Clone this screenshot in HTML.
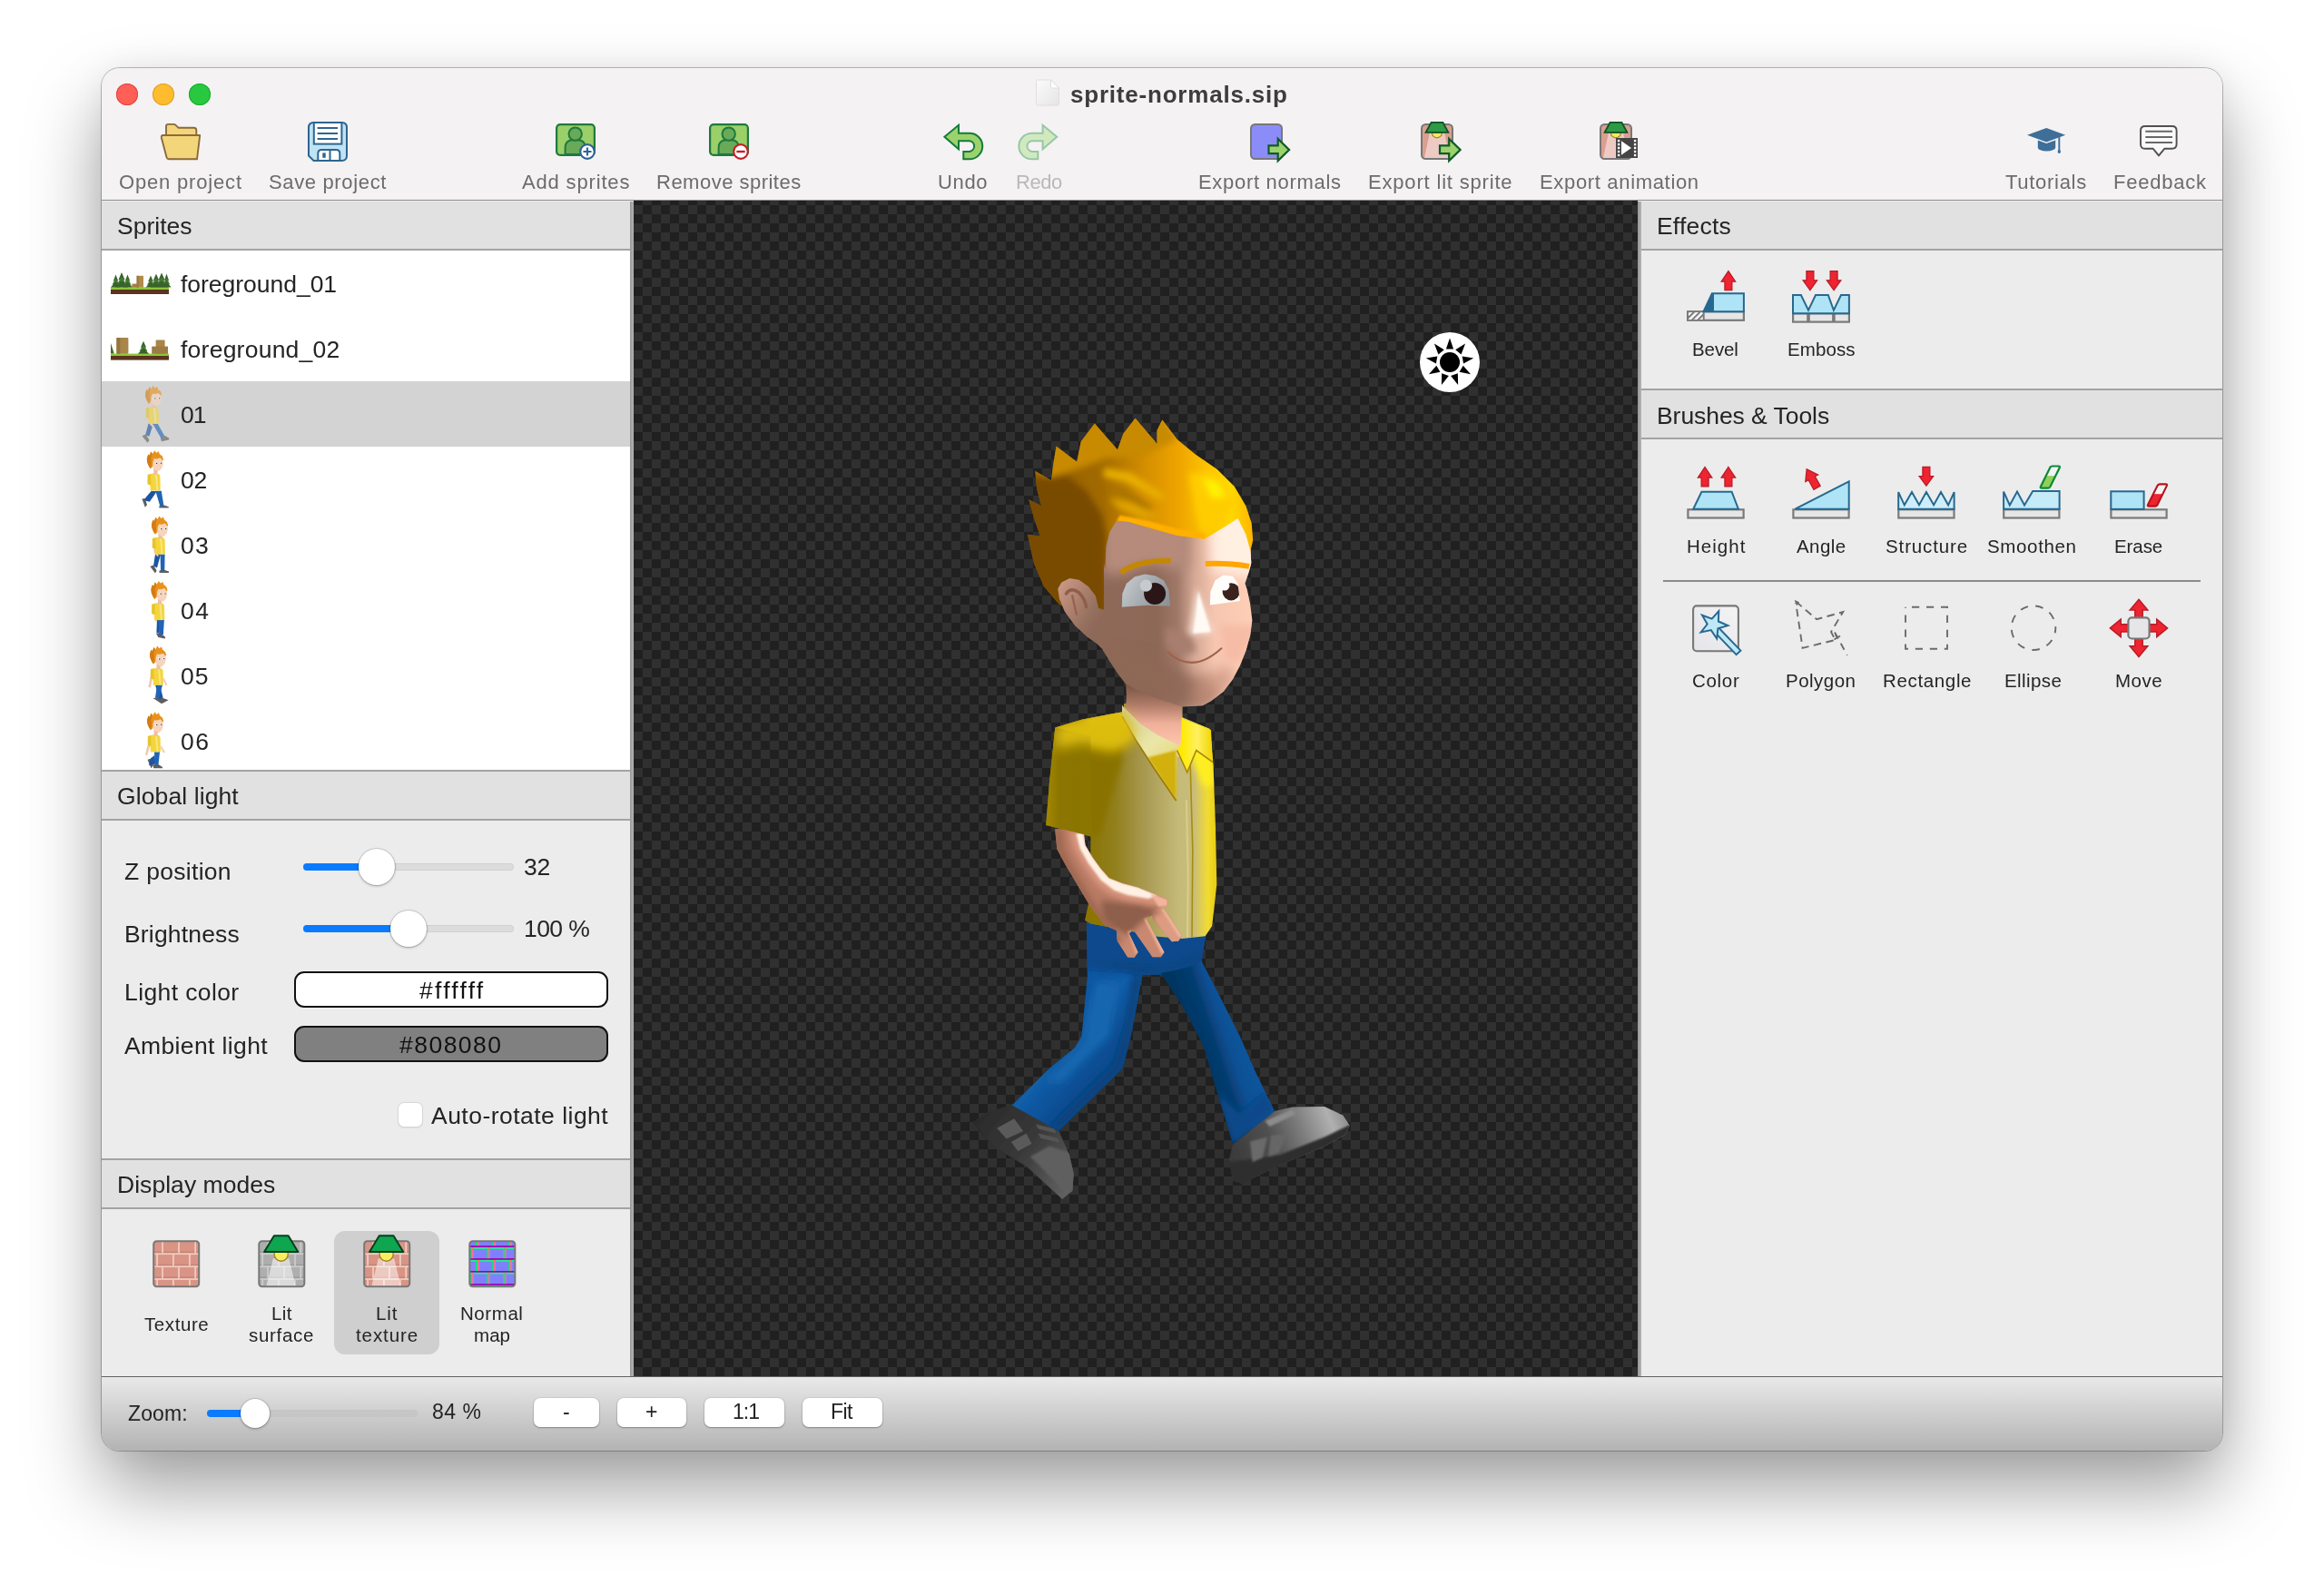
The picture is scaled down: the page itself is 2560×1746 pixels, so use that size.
<!DOCTYPE html>
<html><head><meta charset="utf-8"><title>sprite-normals.sip</title>
<style>

*{box-sizing:border-box;margin:0;padding:0}
html,body{width:2560px;height:1746px;overflow:hidden;background:#fff;font-family:"Liberation Sans",sans-serif;}
.t{position:absolute;white-space:nowrap;}
.abs{position:absolute}
#win{position:absolute;left:112px;top:75px;width:2336px;height:1523px;border-radius:20px;background:#ececec;
 box-shadow:0 0 0 1px rgba(0,0,0,0.25),0 41px 82px rgba(0,0,0,0.38),0 0 36px rgba(0,0,0,0.05);}
#clip{position:absolute;left:112px;top:75px;width:2336px;height:1523px;border-radius:20px;overflow:hidden;}
#page{position:absolute;left:-112px;top:-75px;width:2560px;height:1746px;}
.t{will-change:transform}
.hdr{position:absolute;background:#e1e1e1;border-bottom:2px solid #a3a3a3;height:54px}
.hl{position:absolute;height:2px;background:#a3a3a3}

</style></head>
<body>
<div id="win"></div>
<div id="clip"><div id="page">
<div class="abs" style="left:112px;top:75px;width:2336px;height:146px;background:#f4f2f3"></div>
<div class="abs" style="left:112px;top:220px;width:2336px;height:1px;background:#8e8e8e"></div>
<div class="abs" style="left:128px;top:92px;width:24px;height:24px;border-radius:12px;background:#fe5f57;box-shadow:inset 0 0 0 1px #e0443e"></div>
<div class="abs" style="left:168px;top:92px;width:24px;height:24px;border-radius:12px;background:#febc2e;box-shadow:inset 0 0 0 1px #dea123"></div>
<div class="abs" style="left:208px;top:92px;width:24px;height:24px;border-radius:12px;background:#28c840;box-shadow:inset 0 0 0 1px #1aab29"></div>
<div class="t" style="left:130.7px;top:189.9px;font-size:22px;line-height:22px;color:#6c6c6c;letter-spacing:0.821px;">Open project</div>
<div class="t" style="left:295.7px;top:189.9px;font-size:22px;line-height:22px;color:#6c6c6c;letter-spacing:0.646px;">Save project</div>
<div class="t" style="left:574.7px;top:189.9px;font-size:22px;line-height:22px;color:#6c6c6c;letter-spacing:0.834px;">Add sprites</div>
<div class="t" style="left:723.1px;top:189.9px;font-size:22px;line-height:22px;color:#6c6c6c;letter-spacing:0.489px;">Remove sprites</div>
<div class="t" style="left:1033.2px;top:189.9px;font-size:22px;line-height:22px;color:#6c6c6c;letter-spacing:0.667px;">Undo</div>
<div class="t" style="left:1118.6px;top:189.9px;font-size:22px;line-height:22px;color:#b9b9b9;letter-spacing:-0.466px;">Redo</div>
<div class="t" style="left:1319.8px;top:189.9px;font-size:22px;line-height:22px;color:#6c6c6c;letter-spacing:0.696px;">Export normals</div>
<div class="t" style="left:1507.1px;top:189.9px;font-size:22px;line-height:22px;color:#6c6c6c;letter-spacing:0.819px;">Export lit sprite</div>
<div class="t" style="left:1695.8px;top:189.9px;font-size:22px;line-height:22px;color:#6c6c6c;letter-spacing:0.667px;">Export animation</div>
<div class="t" style="left:2208.7px;top:189.9px;font-size:22px;line-height:22px;color:#6c6c6c;letter-spacing:0.706px;">Tutorials</div>
<div class="t" style="left:2327.6px;top:189.9px;font-size:22px;line-height:22px;color:#6c6c6c;letter-spacing:0.754px;">Feedback</div>
<div class="t" style="left:1178.5px;top:91.0px;font-size:26px;line-height:26px;color:#3d3d3d;letter-spacing:0.794px;font-weight:bold;">sprite-normals.sip</div>
<div class="abs" style="left:112px;top:222px;width:582px;height:1294px;background:#ececec"></div>
<div class="hdr" style="left:112px;top:222px;width:582px"></div>
<div class="abs" style="left:112px;top:276px;width:582px;height:572px;background:#fff"></div>
<div class="abs" style="left:112px;top:420px;width:582px;height:72px;background:#d3d3d3"></div>
<div class="hl" style="left:112px;top:848px;width:582px"></div>
<div class="hdr" style="left:112px;top:850px;width:582px"></div>
<div class="hl" style="left:112px;top:1276px;width:582px"></div>
<div class="hdr" style="left:112px;top:1278px;width:582px"></div>
<div class="abs" style="left:694px;top:222px;width:4px;height:1294px;background:linear-gradient(90deg,#989898,#b4b4b4)"></div>
<div class="abs" style="left:1804px;top:222px;width:4px;height:1294px;background:linear-gradient(90deg,#989898,#b4b4b4)"></div>
<div id="cv" class="abs" style="left:698px;top:221px;width:1106px;height:1295px;background-color:#202020;background-image:conic-gradient(#303030 25%,#202020 0 50%,#303030 0 75%,#202020 0);background-size:20px 20px;background-position:10px 5px"></div>
<div class="abs" style="left:1808px;top:222px;width:640px;height:1294px;background:#ececec"></div>
<div class="hdr" style="left:1808px;top:222px;width:640px"></div>
<div class="hl" style="left:1808px;top:428px;width:640px"></div>
<div class="hdr" style="left:1808px;top:430px;width:640px"></div>
<div class="abs" style="left:112px;top:1516px;width:2336px;height:82px;background:linear-gradient(#e9e9e9,#b3b3b3);border-top:1.5px solid #606060"></div>
<div class="t" style="left:128.7px;top:236.2px;font-size:26.5px;line-height:26.5px;color:#242424;letter-spacing:0.004px;">Sprites</div>
<div class="t" style="left:128.5px;top:864.2px;font-size:26.5px;line-height:26.5px;color:#242424;letter-spacing:0.102px;">Global light</div>
<div class="t" style="left:128.5px;top:1292.2px;font-size:26.5px;line-height:26.5px;color:#242424;letter-spacing:0.043px;">Display modes</div>
<div class="t" style="left:1824.5px;top:236.2px;font-size:26.5px;line-height:26.5px;color:#242424;letter-spacing:0.196px;">Effects</div>
<div class="t" style="left:1824.5px;top:444.6px;font-size:26.5px;line-height:26.5px;color:#242424;letter-spacing:-0.057px;">Brushes &amp; Tools</div>
<div class="t" style="left:198.7px;top:299.6px;font-size:26.5px;line-height:26.5px;color:#242424;letter-spacing:-0.025px;">foreground_01</div>
<div class="t" style="left:198.7px;top:371.6px;font-size:26.5px;line-height:26.5px;color:#242424;letter-spacing:0.242px;">foreground_02</div>
<div class="t" style="left:198.7px;top:443.6px;font-size:26.5px;line-height:26.5px;color:#242424;letter-spacing:-1.000px;">01</div>
<div class="t" style="left:198.7px;top:515.6px;font-size:26.5px;line-height:26.5px;color:#242424;letter-spacing:-0.177px;">02</div>
<div class="t" style="left:198.7px;top:587.6px;font-size:26.5px;line-height:26.5px;color:#242424;letter-spacing:1.223px;">03</div>
<div class="t" style="left:198.7px;top:659.6px;font-size:26.5px;line-height:26.5px;color:#242424;letter-spacing:1.523px;">04</div>
<div class="t" style="left:198.7px;top:731.6px;font-size:26.5px;line-height:26.5px;color:#242424;letter-spacing:1.023px;">05</div>
<div class="t" style="left:198.7px;top:803.6px;font-size:26.5px;line-height:26.5px;color:#242424;letter-spacing:1.523px;">06</div>
<div class="t" style="left:136.6px;top:946.6px;font-size:26.5px;line-height:26.5px;color:#242424;letter-spacing:0.301px;">Z position</div>
<div class="t" style="left:576.8px;top:941.8px;font-size:26.5px;line-height:26.5px;color:#242424;letter-spacing:-0.177px;">32</div>
<div class="t" style="left:136.6px;top:1015.5px;font-size:26.5px;line-height:26.5px;color:#242424;letter-spacing:0.166px;">Brightness</div>
<div class="t" style="left:576.8px;top:1010.1px;font-size:26.5px;line-height:26.5px;color:#242424;letter-spacing:-0.585px;">100 %</div>
<div class="t" style="left:136.6px;top:1079.5px;font-size:26.5px;line-height:26.5px;color:#242424;letter-spacing:0.393px;">Light color</div>
<div class="t" style="left:136.6px;top:1139.3px;font-size:26.5px;line-height:26.5px;color:#242424;letter-spacing:0.367px;">Ambient light</div>
<div class="t" style="left:474.9px;top:1216.1px;font-size:26.5px;line-height:26.5px;color:#242424;letter-spacing:0.476px;">Auto-rotate light</div>
<div class="t" style="left:158.6px;top:1449.3px;font-size:20.5px;line-height:20.5px;color:#242424;letter-spacing:0.580px;">Texture</div>
<div class="t" style="left:298.6px;top:1437.3px;font-size:20.5px;line-height:20.5px;color:#242424;letter-spacing:0.375px;">Lit</div>
<div class="t" style="left:273.8px;top:1461.0px;font-size:20.5px;line-height:20.5px;color:#242424;letter-spacing:0.680px;">surface</div>
<div class="t" style="left:507.4px;top:1437.3px;font-size:20.5px;line-height:20.5px;color:#242424;letter-spacing:0.567px;">Normal</div>
<div class="t" style="left:521.6px;top:1461.0px;font-size:20.5px;line-height:20.5px;color:#242424;letter-spacing:0.062px;">map</div>
<div class="t" style="left:1864.3px;top:375.4px;font-size:20.5px;line-height:20.5px;color:#242424;letter-spacing:-0.095px;">Bevel</div>
<div class="t" style="left:1968.8px;top:375.4px;font-size:20.5px;line-height:20.5px;color:#242424;letter-spacing:0.090px;">Emboss</div>
<div class="t" style="left:1857.9px;top:591.6px;font-size:20.5px;line-height:20.5px;color:#242424;letter-spacing:1.029px;">Height</div>
<div class="t" style="left:1978.7px;top:591.6px;font-size:20.5px;line-height:20.5px;color:#242424;letter-spacing:0.443px;">Angle</div>
<div class="t" style="left:2076.7px;top:591.6px;font-size:20.5px;line-height:20.5px;color:#242424;letter-spacing:0.879px;">Structure</div>
<div class="t" style="left:2189.4px;top:591.6px;font-size:20.5px;line-height:20.5px;color:#242424;letter-spacing:0.650px;">Smoothen</div>
<div class="t" style="left:2329.3px;top:591.6px;font-size:20.5px;line-height:20.5px;color:#242424;letter-spacing:-0.088px;">Erase</div>
<div class="t" style="left:1864.0px;top:739.6px;font-size:20.5px;line-height:20.5px;color:#242424;letter-spacing:0.703px;">Color</div>
<div class="t" style="left:1967.0px;top:739.6px;font-size:20.5px;line-height:20.5px;color:#242424;letter-spacing:0.487px;">Polygon</div>
<div class="t" style="left:2073.8px;top:739.6px;font-size:20.5px;line-height:20.5px;color:#242424;letter-spacing:0.649px;">Rectangle</div>
<div class="t" style="left:2207.8px;top:739.6px;font-size:20.5px;line-height:20.5px;color:#242424;letter-spacing:0.419px;">Ellipse</div>
<div class="t" style="left:2329.9px;top:739.6px;font-size:20.5px;line-height:20.5px;color:#242424;letter-spacing:0.524px;">Move</div>
<div class="t" style="left:140.6px;top:1545.7px;font-size:23px;line-height:23px;color:#242424;letter-spacing:0.105px;">Zoom:</div>
<div class="t" style="left:476.2px;top:1544.3px;font-size:23px;line-height:23px;color:#242424;letter-spacing:0.492px;">84 %</div>
<div class="abs" style="left:334px;top:951.0px;width:232px;height:8px;border-radius:4.0px;background:#dcdcdc;box-shadow:inset 0 0 0 1px rgba(0,0,0,0.05)"></div>
<div class="abs" style="left:334px;top:951.0px;width:81px;height:8px;border-radius:4.0px;background:#0a7aff"></div>
<div class="abs" style="left:395.0px;top:935.0px;width:40px;height:40px;border-radius:50%;background:#fff;box-shadow:0 0 0 1px rgba(0,0,0,0.12),0 1px 3px rgba(0,0,0,0.28)"></div>
<div class="abs" style="left:334px;top:1019.0px;width:232px;height:8px;border-radius:4.0px;background:#dcdcdc;box-shadow:inset 0 0 0 1px rgba(0,0,0,0.05)"></div>
<div class="abs" style="left:334px;top:1019.0px;width:116px;height:8px;border-radius:4.0px;background:#0a7aff"></div>
<div class="abs" style="left:430.0px;top:1003.0px;width:40px;height:40px;border-radius:50%;background:#fff;box-shadow:0 0 0 1px rgba(0,0,0,0.12),0 1px 3px rgba(0,0,0,0.28)"></div>
<div class="abs" style="left:324px;top:1070px;width:346px;height:40px;border-radius:11px;background:#fff;border:2px solid #111"></div>
<div class="abs" style="left:324px;top:1130px;width:346px;height:40px;border-radius:11px;background:#808080;border:2px solid #111"></div>
<div class="t" style="left:461.5px;top:1077.9px;font-size:26.5px;line-height:26.5px;color:#111;letter-spacing:2.279px;">#ffffff</div>
<div class="t" style="left:440.2px;top:1138.2px;font-size:26.5px;line-height:26.5px;color:#111;letter-spacing:1.472px;">#808080</div>
<div class="abs" style="left:438px;top:1214px;width:28px;height:28px;border-radius:7px;background:#fff;box-shadow:inset 0 0 0 1px rgba(0,0,0,0.16),0 1px 1px rgba(0,0,0,0.06)"></div>
<div class="abs" style="left:368px;top:1356px;width:116px;height:136px;border-radius:12px;background:#cfcfcf"></div>
<div class="t" style="left:414.0px;top:1437.3px;font-size:20.5px;line-height:20.5px;color:#242424;letter-spacing:0.925px;">Lit</div>
<div class="t" style="left:391.6px;top:1461.0px;font-size:20.5px;line-height:20.5px;color:#242424;letter-spacing:0.905px;">texture</div>
<div class="abs" style="left:228px;top:1553px;width:232px;height:8px;border-radius:4px;background:#c6c6c6"></div>
<div class="abs" style="left:228px;top:1553px;width:53px;height:8px;border-radius:4px;background:#0a7aff"></div>
<div class="abs" style="left:265.0px;top:1541.0px;width:32px;height:32px;border-radius:50%;background:#fff;box-shadow:0 0 0 1px rgba(0,0,0,0.1),0 1px 3px rgba(0,0,0,0.3)"></div>
<div class="abs" style="left:588px;top:1540px;width:72px;height:32px;border-radius:7px;background:#fff;box-shadow:0 0 0 1px rgba(0,0,0,0.06),0 1px 2px rgba(0,0,0,0.28)"></div>
<div class="t" style="left:620.2px;top:1543.9px;font-size:23px;line-height:23px;color:#222;letter-spacing:0.000px;">-</div>
<div class="abs" style="left:680px;top:1540px;width:76px;height:32px;border-radius:7px;background:#fff;box-shadow:0 0 0 1px rgba(0,0,0,0.06),0 1px 2px rgba(0,0,0,0.28)"></div>
<div class="t" style="left:711.3px;top:1543.9px;font-size:23px;line-height:23px;color:#222;letter-spacing:0.000px;">+</div>
<div class="abs" style="left:776px;top:1540px;width:88px;height:32px;border-radius:7px;background:#fff;box-shadow:0 0 0 1px rgba(0,0,0,0.06),0 1px 2px rgba(0,0,0,0.28)"></div>
<div class="t" style="left:807.0px;top:1543.9px;font-size:23px;line-height:23px;color:#222;letter-spacing:-1.000px;">1:1</div>
<div class="abs" style="left:884px;top:1540px;width:88px;height:32px;border-radius:7px;background:#fff;box-shadow:0 0 0 1px rgba(0,0,0,0.06),0 1px 2px rgba(0,0,0,0.28)"></div>
<div class="t" style="left:915.4px;top:1543.9px;font-size:23px;line-height:23px;color:#222;letter-spacing:-0.524px;">Fit</div>
<svg class="abs" style="left:0;top:0" width="2560" height="260" viewBox="0 0 2560 260"><g transform="translate(1141.5 88)"><defs><linearGradient id="dg" x1="0" y1="0" x2="1" y2="1"><stop offset="0" stop-color="#fbfbfb"/><stop offset="1" stop-color="#e6e5e6"/></linearGradient></defs>
<path d="M1.5 0H16L25 9V26.5a1.5 1.5 0 0 1-1.5 1.5H1.5A1.5 1.5 0 0 1 0 26.5V1.5A1.5 1.5 0 0 1 1.5 0Z" fill="url(#dg)" stroke="#dcdbdc" stroke-width="0.8"/>
<path d="M16 0V7.5a1.5 1.5 0 0 0 1.5 1.5H25Z" fill="#fff" stroke="#d9d8d9" stroke-width="0.8"/></g><g transform="translate(177 136)"><path d="M6 13V3.2Q6 .9 8.3 .9H14.6Q15.6 .9 16.3 1.6L19.4 4.7H36.6Q39.3 4.7 39.3 7.4V13Z" fill="#f3d67a" stroke="#8a6a3c" stroke-width="1.9" stroke-linejoin="round"/>
<path d="M2.6 13H43.2L40 39.3H9Q7.2 39.3 6.6 37.5L.9 16Q.3 13 2.6 13Z" fill="#f3d67a" stroke="#8a6a3c" stroke-width="1.9" stroke-linejoin="round"/></g><g transform="translate(339 134)"><path d="M6.5 1H37.5Q43 1 43 6.5V37.5Q43 43 37.5 43H6.5L1 37.5V6.5Q1 1 6.5 1Z" fill="#bfe3f3" stroke="#2d6590" stroke-width="2"/>
<rect x="6.8" y="1" width="30.6" height="23.6" fill="#fff" stroke="#2d6590" stroke-width="2"/>
<path d="M10.6 6.9H33M10.6 12.9H33M10.6 19H33" stroke="#2d6590" stroke-width="2"/>
<path d="M11.3 43V35Q11.3 30.9 15.4 30.9H31.2Q35.3 30.9 35.3 35V43Z" fill="#fff" stroke="#2d6590" stroke-width="2"/>
<path d="M24.5 31V43" stroke="#2d6590" stroke-width="2"/>
<rect x="16.3" y="34.4" width="3.4" height="5.4" fill="#2d6590"/></g><g transform="translate(612 136)"><rect x="1.1" y="1.1" width="41.8" height="33.8" rx="4" fill="#9bcf6a" stroke="#1d7a3e" stroke-width="2.2"/>
<path d="M10.6 34V27Q10.6 18.3 19 18.3H24.4Q32.8 18.3 32.8 27V34Z" fill="#68aa58" stroke="#1d7a3e" stroke-width="2"/>
<circle cx="21.7" cy="11.6" r="7.2" fill="#68aa58" stroke="#1d7a3e" stroke-width="2"/>
<circle cx="35" cy="31" r="7.8" fill="#fff" stroke="#2f6496" stroke-width="2.2"/><path d="M30.5 31H39.5M35 26.5V35.5" stroke="#2f6496" stroke-width="2.2"/></g><g transform="translate(781 136)"><rect x="1.1" y="1.1" width="41.8" height="33.8" rx="4" fill="#9bcf6a" stroke="#1d7a3e" stroke-width="2.2"/>
<path d="M10.6 34V27Q10.6 18.3 19 18.3H24.4Q32.8 18.3 32.8 27V34Z" fill="#68aa58" stroke="#1d7a3e" stroke-width="2"/>
<circle cx="21.7" cy="11.6" r="7.2" fill="#68aa58" stroke="#1d7a3e" stroke-width="2"/>
<circle cx="35" cy="31" r="7.8" fill="#fff" stroke="#c4202a" stroke-width="2.2"/><path d="M30.3 31H39.7" stroke="#c4202a" stroke-width="2.4"/></g><g transform="translate(1039 136.3)"><path d="M1.4 14.5L17 1.5V10.5H29A14.25 14.25 0 0 1 29 39H22.3V30.6H29A5.9 5.9 0 0 0 29 18.9H17V28L1.4 14.5Z" fill="#9bd26c" stroke="#157a3c" stroke-width="2" stroke-linejoin="miter"/></g><g transform="translate(1165.6 136.3) scale(-1 1)"><path d="M1.4 14.5L17 1.5V10.5H29A14.25 14.25 0 0 1 29 39H22.3V30.6H29A5.9 5.9 0 0 0 29 18.9H17V28L1.4 14.5Z" fill="#d2e9c0" stroke="#96c7a6" stroke-width="2"/></g><g transform="translate(1377 136)"><rect x="1" y="1" width="34" height="38" rx="4.5" fill="#8c8cf8" stroke="#777" stroke-width="2"/></g><g transform="translate(1397.5 152.3)"><path d="M0 8.1H10.2V0.6L22.6 12.7L10.2 24.8V16.9H0Z" fill="#9bd26c" stroke="#0f5a2a" stroke-width="2.2" stroke-linejoin="miter"/></g><g transform="translate(1565 136)"><defs><clipPath id="lc1565"><rect x="1" y="1" width="34" height="38" rx="4.5"/></clipPath></defs>
<rect x="1" y="1" width="34" height="38" rx="4.5" fill="#dc9e8e"/>
<path d="M10 10L3.5 40H32.5L26 10Z" fill="#edcbc4" clip-path="url(#lc1565)"/>
<rect x="1" y="1" width="34" height="38" rx="4.5" fill="none" stroke="#777" stroke-width="2"/>
<path d="M12.3 10.2A5.6 5.6 0 0 0 23.5 10.2Z" fill="#f4ea62" stroke="#a08622" stroke-width="1.2"/>
<path d="M11.6 -1.2H24.4L30.4 9.8H5.6Z" fill="#2f9a45" stroke="#0c5226" stroke-width="1.8" stroke-linejoin="miter"/></g><g transform="translate(1586 152.3)"><path d="M0 8.1H10.2V0.6L22.6 12.7L10.2 24.8V16.9H0Z" fill="#9bd26c" stroke="#0f5a2a" stroke-width="2.2" stroke-linejoin="miter"/></g><g transform="translate(1762 136)"><defs><clipPath id="lc1762"><rect x="1" y="1" width="34" height="38" rx="4.5"/></clipPath></defs>
<rect x="1" y="1" width="34" height="38" rx="4.5" fill="#dc9e8e"/>
<path d="M10 10L3.5 40H32.5L26 10Z" fill="#edcbc4" clip-path="url(#lc1762)"/>
<rect x="1" y="1" width="34" height="38" rx="4.5" fill="none" stroke="#777" stroke-width="2"/>
<path d="M12.3 10.2A5.6 5.6 0 0 0 23.5 10.2Z" fill="#f4ea62" stroke="#a08622" stroke-width="1.2"/>
<path d="M11.6 -1.2H24.4L30.4 9.8H5.6Z" fill="#2f9a45" stroke="#0c5226" stroke-width="1.8" stroke-linejoin="miter"/></g><g transform="translate(1780 152)"><rect x="0" y="0" width="24" height="22" fill="#444"/><rect x="1.9" y="1.9000000000000001" width="2.4" height="2.4" fill="#fff"/><rect x="19.9" y="1.9000000000000001" width="2.4" height="2.4" fill="#fff"/><rect x="1.9" y="5.8999999999999995" width="2.4" height="2.4" fill="#fff"/><rect x="19.9" y="5.8999999999999995" width="2.4" height="2.4" fill="#fff"/><rect x="1.9" y="9.8" width="2.4" height="2.4" fill="#fff"/><rect x="19.9" y="9.8" width="2.4" height="2.4" fill="#fff"/><rect x="1.9" y="13.8" width="2.4" height="2.4" fill="#fff"/><rect x="19.9" y="13.8" width="2.4" height="2.4" fill="#fff"/><rect x="1.9" y="17.8" width="2.4" height="2.4" fill="#fff"/><rect x="19.9" y="17.8" width="2.4" height="2.4" fill="#fff"/><path d="M6 3.3V18.8L17 11Z" fill="#fff"/></g><g transform="translate(2233 141)"><path d="M0 7.7L21.2 0L42.2 7.7L21.2 15.4Z" fill="#3d6f99"/>
<path d="M11.8 13.6L21.2 17L31.2 13.4V21.5Q31.2 23 29 24Q21.5 27 13.8 24Q11.8 23 11.8 21.5Z" fill="#3d6f99"/>
<path d="M35.3 10V25.5" stroke="#3d6f99" stroke-width="1.9"/><ellipse cx="35.3" cy="26" rx="1.7" ry="2" fill="#3d6f99"/></g><g transform="translate(2357 138)"><path d="M6 1H35.6Q40.6 1 40.6 6V20.8Q40.6 25.8 35.6 25.8H27.2L21 33.4L14.8 25.8H6Q1 25.8 1 20.8V6Q1 1 6 1Z" fill="#fafafa" stroke="#505050" stroke-width="1.9" stroke-linejoin="round"/>
<path d="M6.3 6.8H36M6.3 13H36M6.3 19H36" stroke="#686868" stroke-width="2"/></g></svg>
<svg class="abs" style="left:0;top:0" width="2560" height="1746" viewBox="0 0 2560 1746"><g transform="translate(1858 298.3)"><defs><pattern id="hat" width="4.6" height="4.6" patternUnits="userSpaceOnUse" patternTransform="rotate(-45)"><rect width="4.6" height="4.6" fill="#fff"/><rect width="4.6" height="2.1" fill="#7a7a7a"/></pattern></defs>
<rect x="1.1" y="44.9" width="61.8" height="9.6" fill="#e6e6e6" stroke="#7a7a7a" stroke-width="2.2"/>
<rect x="2" y="45.8" width="16.5" height="7.8" fill="url(#hat)"/><path d="M18.7 45V54.5" stroke="#7a7a7a" stroke-width="2"/>
<path d="M27.9 24.9H62.9V44.9H18.5Z" fill="#aee4f5" stroke="#276890" stroke-width="2" stroke-linejoin="miter"/>
<path d="M27.9 24.9H30V44.9H18.5Z" fill="#276890"/><path d="M45.9 0.3L53.6 11.9H49.85V21.3H41.949999999999996V11.9H38.199999999999996Z" fill="#ee2430" stroke="#b81c28" stroke-width="1.3" stroke-linejoin="miter"/></g><g transform="translate(1974 298.3)"><rect x="1.1" y="47" width="61.8" height="9.299999999999997" fill="#e6e6e6" stroke="#7a7a7a" stroke-width="2.2"/><path d="M18 47V56M45.9 47V56" stroke="#7a7a7a" stroke-width="3.6"/><path d="M1 26.7H9.9L18 43.5L26 26.7H39.8L45.9 43.5L54 26.7H62.9V47H1Z" fill="#aee4f5" stroke="#276890" stroke-width="2" stroke-linejoin="miter"/><path d="M19.9 21.3L27.599999999999998 10.5H23.849999999999998V0.3H15.95V10.5H12.2Z" fill="#ee2430" stroke="#b81c28" stroke-width="1.3" stroke-linejoin="miter"/><path d="M46.1 21.3L53.800000000000004 10.5H50.050000000000004V0.3H42.15V10.5H38.4Z" fill="#ee2430" stroke="#b81c28" stroke-width="1.3" stroke-linejoin="miter"/></g><g transform="translate(1858.3 514.2)"><rect x="1.1" y="47.1" width="61.199999999999996" height="9.199999999999996" fill="#e6e6e6" stroke="#7a7a7a" stroke-width="2.2"/><path d="M16.1 27.5H49.3L56.6 46.5H6.9Z" fill="#aee4f5" stroke="#276890" stroke-width="2" stroke-linejoin="miter"/><path d="M19.8 0.3L27.5 11.9H23.75V21.7H15.850000000000001V11.9H12.100000000000001Z" fill="#ee2430" stroke="#b81c28" stroke-width="1.3" stroke-linejoin="miter"/><path d="M45.6 0.3L53.300000000000004 11.9H49.550000000000004V21.7H41.65V11.9H37.9Z" fill="#ee2430" stroke="#b81c28" stroke-width="1.3" stroke-linejoin="miter"/></g><g transform="translate(1974.3 514.2)"><rect x="1.1" y="47.1" width="61.199999999999996" height="9.199999999999996" fill="#e6e6e6" stroke="#7a7a7a" stroke-width="2.2"/><path d="M3.2 46.5L62.4 16.2V46.5Z" fill="#aee4f5" stroke="#276890" stroke-width="2" stroke-linejoin="miter"/><g transform="translate(15.9 2.6) rotate(-29)"><path d="M0 0L7.9 11.4H4.1V23.5H-4.1V11.4H-7.9Z" fill="#ee2430" stroke="#b81c28" stroke-width="1.3" stroke-linejoin="miter"/></g></g><g transform="translate(2090.2 514.2)"><rect x="1.1" y="47.1" width="61.199999999999996" height="9.199999999999996" fill="#e6e6e6" stroke="#7a7a7a" stroke-width="2.2"/><path d="M1 27.9L7.6 42.1L15.8 27.9L23.8 42.1L31.7 27.9L39.9 42.1L47.8 27.9L55.9 42.1L62.4 27.9V46.5H1Z" fill="#cdeefa" stroke="#276890" stroke-width="2" stroke-linejoin="miter"/><path d="M31.7 20.9L39.4 10.399999999999999H35.65V0.2H27.75V10.399999999999999H24.0Z" fill="#ee2430" stroke="#b81c28" stroke-width="1.3" stroke-linejoin="miter"/></g><g transform="translate(2206.1 514.2)"><rect x="1.1" y="47.1" width="61.199999999999996" height="9.199999999999996" fill="#e6e6e6" stroke="#7a7a7a" stroke-width="2.2"/><path d="M1 27.4L7.7 42.3L15.9 27.4L23.9 42.3L33.1 26.9H62.5V46.5H1Z" fill="#c5eaf8" stroke="#276890" stroke-width="2" stroke-linejoin="miter"/><defs><clipPath id="er1"><path d="M54.6 -0.7H61.6Q63.4 -0.7 62.6 1L52.1 22.3Q51.3 23.5 49.8 23.5H42.8Q41 23.5 41.8 21.8L52.3 0.5Q53.1 -0.7 54.6 -0.7Z"/></clipPath></defs><g clip-path="url(#er1)"><rect x="38" y="-3" width="28" height="13" fill="#f3f3f3"/><rect x="38" y="10" width="28" height="15" fill="#8fd05a"/></g><path d="M54.6 -0.7H61.6Q63.4 -0.7 62.6 1L52.1 22.3Q51.3 23.5 49.8 23.5H42.8Q41 23.5 41.8 21.8L52.3 0.5Q53.1 -0.7 54.6 -0.7Z" fill="none" stroke="#0b8a35" stroke-width="2.2"/></g><g transform="translate(2324.3 514.2)"><rect x="1.1" y="47.1" width="61.199999999999996" height="9.199999999999996" fill="#e6e6e6" stroke="#7a7a7a" stroke-width="2.2"/><rect x="1" y="27.1" width="36.3" height="19.6" fill="#aee4f5" stroke="#276890" stroke-width="2"/><defs><clipPath id="er2"><path d="M54.8 19.2H61.5Q63.3 19.2 62.5 20.9L52 42.2Q51.2 43.4 49.7 43.4H42.7Q40.9 43.4 41.7 41.7L52.5 20.4Q53.3 19.2 54.8 19.2Z"/></clipPath></defs><g clip-path="url(#er2)"><rect x="38" y="17" width="28" height="13" fill="#f3f3f3"/><rect x="38" y="30" width="28" height="15" fill="#ee2430"/></g><path d="M54.8 19.2H61.5Q63.3 19.2 62.5 20.9L52 42.2Q51.2 43.4 49.7 43.4H42.7Q40.9 43.4 41.7 41.7L52.5 20.4Q53.3 19.2 54.8 19.2Z" fill="none" stroke="#b5121b" stroke-width="2.1"/></g><defs><linearGradient id="cg" x1="0" y1="1" x2="1" y2="0"><stop offset="0" stop-color="#e4e4ea"/><stop offset="1" stop-color="#f4f4f4"/></linearGradient></defs><rect x="1865.1" y="667.4" width="49.8" height="49.8" rx="4" fill="url(#cg)" stroke="#777" stroke-width="2.1"/><path d="M1888.3 695.8L1892.9 691.2L1917.4 716.6L1912.6 721.2Z" fill="#bfe8f7" stroke="#276890" stroke-width="2" stroke-linejoin="miter"/><polygon points="1893.3,673.2 1892.9,684.5 1903.3,689.1 1892.4,692.2 1891.2,703.5 1884.8,694.1 1873.7,696.5 1880.7,687.5 1875.0,677.7 1885.7,681.6" fill="#bfe8f7" stroke="#276890" stroke-width="2" stroke-linejoin="miter"/><path d="M1978.2 662.6L2001.2 682.2L2030.2 674.1L2017 696L2021.6 705L1985.6 713.8L1978.2 664" stroke="#6b6b6b" stroke-width="1.9" fill="none" stroke-dasharray="8.5 5.5"/><path d="M1976.6 660.8L1979.4 667.4L1982 663.3Z" fill="#6b6b6b"/><path d="M2021 696.5L2034.8 721.8" stroke="#6b6b6b" stroke-width="1.9" fill="none" stroke-dasharray="8 6"/><path d="M2020.5 704.5L2027 700.5M2024 703L2022 699" stroke="#6b6b6b" stroke-width="1.9" fill="none"/><rect x="2099" y="668.8" width="46" height="46" stroke="#6b6b6b" stroke-width="1.9" fill="none" stroke-width="2.1" stroke-dasharray="8.2 7.8" stroke-dashoffset="-7"/><circle cx="2240" cy="691.7" r="24.3" stroke="#6b6b6b" stroke-width="1.9" fill="none" stroke-width="2.1" stroke-dasharray="8.6 8.4" stroke-dashoffset="3"/><g transform="translate(2356 691.9)"><g transform="rotate(0)"><path d="M0 -31.6L9.8 -19.8H4.2V-8H-4.2V-19.8H-9.8Z" fill="#ee2430" stroke="#b81c28" stroke-width="1.5" stroke-linejoin="miter"/></g><g transform="rotate(90)"><path d="M0 -31.6L9.8 -19.8H4.2V-8H-4.2V-19.8H-9.8Z" fill="#ee2430" stroke="#b81c28" stroke-width="1.5" stroke-linejoin="miter"/></g><g transform="rotate(180)"><path d="M0 -31.6L9.8 -19.8H4.2V-8H-4.2V-19.8H-9.8Z" fill="#ee2430" stroke="#b81c28" stroke-width="1.5" stroke-linejoin="miter"/></g><g transform="rotate(270)"><path d="M0 -31.6L9.8 -19.8H4.2V-8H-4.2V-19.8H-9.8Z" fill="#ee2430" stroke="#b81c28" stroke-width="1.5" stroke-linejoin="miter"/></g><rect x="-11.6" y="-11.6" width="23.2" height="23.2" rx="4" fill="#e6e6e8" stroke="#777" stroke-width="2.2"/></g><defs><clipPath id="b1"><rect x="169.2" y="1367.2" width="50" height="50" rx="3.5"/></clipPath></defs><g clip-path="url(#b1)"><rect x="168.2" y="1366.2" width="52" height="52" fill="#d99485"/><rect x="168.2" y="1378.6000000000001" width="52" height="1.9" fill="#c98374"/><rect x="168.2" y="1392.6000000000001" width="52" height="1.9" fill="#c98374"/><rect x="168.2" y="1406.4" width="52" height="1.9" fill="#c98374"/><rect x="168.2" y="1419.6000000000001" width="52" height="1.9" fill="#c98374"/><rect x="168.2" y="1380.4" width="52" height="1.7" fill="#efcfc4"/><rect x="168.2" y="1394.4" width="52" height="1.7" fill="#efcfc4"/><rect x="168.2" y="1408.2" width="52" height="1.7" fill="#efcfc4"/><rect x="178.15" y="1367.2" width="1.7" height="13.2" fill="#efcfc4"/><rect x="196.15" y="1367.2" width="1.7" height="13.2" fill="#efcfc4"/><rect x="214.35" y="1367.2" width="1.7" height="13.2" fill="#efcfc4"/><rect x="172.25" y="1382.0" width="1.7" height="12.399999999999999" fill="#efcfc4"/><rect x="190.04999999999998" y="1382.0" width="1.7" height="12.399999999999999" fill="#efcfc4"/><rect x="208.04999999999998" y="1382.0" width="1.7" height="12.399999999999999" fill="#efcfc4"/><rect x="178.15" y="1396.0" width="1.7" height="12.2" fill="#efcfc4"/><rect x="196.15" y="1396.0" width="1.7" height="12.2" fill="#efcfc4"/><rect x="214.35" y="1396.0" width="1.7" height="12.2" fill="#efcfc4"/><rect x="172.25" y="1409.8" width="1.7" height="7.399999999999999" fill="#efcfc4"/><rect x="190.04999999999998" y="1409.8" width="1.7" height="7.399999999999999" fill="#efcfc4"/><rect x="208.04999999999998" y="1409.8" width="1.7" height="7.399999999999999" fill="#efcfc4"/></g><rect x="169.2" y="1367.2" width="50" height="50" rx="3.5" fill="none" stroke="#777" stroke-width="2"/><defs><clipPath id="b2"><rect x="285.3" y="1367.2" width="50" height="50" rx="3.5"/></clipPath></defs><g clip-path="url(#b2)"><rect x="284.3" y="1366.2" width="52" height="52" fill="#aeaeae"/><rect x="284.3" y="1378.6000000000001" width="52" height="1.9" fill="#9c9c9c"/><rect x="284.3" y="1392.6000000000001" width="52" height="1.9" fill="#9c9c9c"/><rect x="284.3" y="1406.4" width="52" height="1.9" fill="#9c9c9c"/><rect x="284.3" y="1419.6000000000001" width="52" height="1.9" fill="#9c9c9c"/><rect x="284.3" y="1380.4" width="52" height="1.7" fill="#cdcdcd"/><rect x="284.3" y="1394.4" width="52" height="1.7" fill="#cdcdcd"/><rect x="284.3" y="1408.2" width="52" height="1.7" fill="#cdcdcd"/><rect x="294.25" y="1367.2" width="1.7" height="13.2" fill="#cdcdcd"/><rect x="312.25" y="1367.2" width="1.7" height="13.2" fill="#cdcdcd"/><rect x="330.45" y="1367.2" width="1.7" height="13.2" fill="#cdcdcd"/><rect x="288.34999999999997" y="1382.0" width="1.7" height="12.399999999999999" fill="#cdcdcd"/><rect x="306.15" y="1382.0" width="1.7" height="12.399999999999999" fill="#cdcdcd"/><rect x="324.15" y="1382.0" width="1.7" height="12.399999999999999" fill="#cdcdcd"/><rect x="294.25" y="1396.0" width="1.7" height="12.2" fill="#cdcdcd"/><rect x="312.25" y="1396.0" width="1.7" height="12.2" fill="#cdcdcd"/><rect x="330.45" y="1396.0" width="1.7" height="12.2" fill="#cdcdcd"/><rect x="288.34999999999997" y="1409.8" width="1.7" height="7.399999999999999" fill="#cdcdcd"/><rect x="306.15" y="1409.8" width="1.7" height="7.399999999999999" fill="#cdcdcd"/><rect x="324.15" y="1409.8" width="1.7" height="7.399999999999999" fill="#cdcdcd"/><path d="M300.90000000000003 1386.2L292.8 1419.2H326.3L318.3 1386.2Z" fill="#fff" fill-opacity="0.55"/></g><rect x="285.3" y="1367.2" width="50" height="50" rx="3.5" fill="none" stroke="#777" stroke-width="2"/><circle cx="309.7" cy="1381.6000000000001" r="7.6" fill="#f7ef62" stroke="#a68420" stroke-width="1.4"/><path d="M301.90000000000003 1361.2H317.6L328.3 1379.0H291.1Z" fill="#0ea650" stroke="#06401c" stroke-width="2" stroke-linejoin="round"/><defs><clipPath id="b3"><rect x="401.2" y="1367.2" width="50" height="50" rx="3.5"/></clipPath></defs><g clip-path="url(#b3)"><rect x="400.2" y="1366.2" width="52" height="52" fill="#d99485"/><rect x="400.2" y="1378.6000000000001" width="52" height="1.9" fill="#c98374"/><rect x="400.2" y="1392.6000000000001" width="52" height="1.9" fill="#c98374"/><rect x="400.2" y="1406.4" width="52" height="1.9" fill="#c98374"/><rect x="400.2" y="1419.6000000000001" width="52" height="1.9" fill="#c98374"/><rect x="400.2" y="1380.4" width="52" height="1.7" fill="#efcfc4"/><rect x="400.2" y="1394.4" width="52" height="1.7" fill="#efcfc4"/><rect x="400.2" y="1408.2" width="52" height="1.7" fill="#efcfc4"/><rect x="410.15" y="1367.2" width="1.7" height="13.2" fill="#efcfc4"/><rect x="428.15" y="1367.2" width="1.7" height="13.2" fill="#efcfc4"/><rect x="446.34999999999997" y="1367.2" width="1.7" height="13.2" fill="#efcfc4"/><rect x="404.24999999999994" y="1382.0" width="1.7" height="12.399999999999999" fill="#efcfc4"/><rect x="422.04999999999995" y="1382.0" width="1.7" height="12.399999999999999" fill="#efcfc4"/><rect x="440.04999999999995" y="1382.0" width="1.7" height="12.399999999999999" fill="#efcfc4"/><rect x="410.15" y="1396.0" width="1.7" height="12.2" fill="#efcfc4"/><rect x="428.15" y="1396.0" width="1.7" height="12.2" fill="#efcfc4"/><rect x="446.34999999999997" y="1396.0" width="1.7" height="12.2" fill="#efcfc4"/><rect x="404.24999999999994" y="1409.8" width="1.7" height="7.399999999999999" fill="#efcfc4"/><rect x="422.04999999999995" y="1409.8" width="1.7" height="7.399999999999999" fill="#efcfc4"/><rect x="440.04999999999995" y="1409.8" width="1.7" height="7.399999999999999" fill="#efcfc4"/><path d="M416.8 1386.2L408.7 1419.2H442.2L434.2 1386.2Z" fill="#fff" fill-opacity="0.5"/></g><rect x="401.2" y="1367.2" width="50" height="50" rx="3.5" fill="none" stroke="#777" stroke-width="2"/><circle cx="425.59999999999997" cy="1381.6000000000001" r="7.6" fill="#f7ef62" stroke="#a68420" stroke-width="1.4"/><path d="M417.8 1361.2H433.5L444.2 1379.0H407.0Z" fill="#0ea650" stroke="#06401c" stroke-width="2" stroke-linejoin="round"/><defs><clipPath id="b4"><rect x="517.3" y="1367.2" width="50" height="50" rx="3.5"/></clipPath></defs><g clip-path="url(#b4)"><rect x="516.3" y="1366.2" width="52" height="52" fill="#8080ff"/><rect x="516.3" y="1372.2" width="52" height="1.8" fill="#9a00b0"/><rect x="516.3" y="1374.0000000000002" width="52" height="1.8" fill="#22f08a"/><rect x="516.3" y="1386.1" width="52" height="1.8" fill="#9a00b0"/><rect x="516.3" y="1387.9" width="52" height="1.8" fill="#22f08a"/><rect x="516.3" y="1400.0" width="52" height="1.8" fill="#9a00b0"/><rect x="516.3" y="1401.8000000000002" width="52" height="1.8" fill="#22f08a"/><rect x="516.3" y="1414.1" width="52" height="1.8" fill="#9a00b0"/><rect x="516.3" y="1415.9" width="52" height="1.8" fill="#22f08a"/><rect x="524.1999999999999" y="1366.2" width="1.8" height="6" fill="#00f060"/><rect x="525.9999999999999" y="1366.2" width="1.8" height="6" fill="#ff6aa8"/><rect x="542.1999999999999" y="1366.2" width="1.8" height="6" fill="#00f060"/><rect x="543.9999999999999" y="1366.2" width="1.8" height="6" fill="#ff6aa8"/><rect x="560.1" y="1366.2" width="1.8" height="6" fill="#00f060"/><rect x="561.9" y="1366.2" width="1.8" height="6" fill="#ff6aa8"/><rect x="518.1" y="1375.8" width="1.8" height="10.4" fill="#00f060"/><rect x="519.9" y="1375.8" width="1.8" height="10.4" fill="#ff6aa8"/><rect x="519.9" y="1374.1" width="1.8" height="1.8" fill="#ff7a30"/><rect x="536.1" y="1375.8" width="1.8" height="10.4" fill="#00f060"/><rect x="537.9" y="1375.8" width="1.8" height="10.4" fill="#ff6aa8"/><rect x="537.9" y="1374.1" width="1.8" height="1.8" fill="#ff7a30"/><rect x="554.1" y="1375.8" width="1.8" height="10.4" fill="#00f060"/><rect x="555.9" y="1375.8" width="1.8" height="10.4" fill="#ff6aa8"/><rect x="555.9" y="1374.1" width="1.8" height="1.8" fill="#ff7a30"/><rect x="524.1999999999999" y="1389.7" width="1.8" height="10.399999999999999" fill="#00f060"/><rect x="525.9999999999999" y="1389.7" width="1.8" height="10.399999999999999" fill="#ff6aa8"/><rect x="525.9999999999999" y="1388.0" width="1.8" height="1.8" fill="#ff7a30"/><rect x="542.1999999999999" y="1389.7" width="1.8" height="10.399999999999999" fill="#00f060"/><rect x="543.9999999999999" y="1389.7" width="1.8" height="10.399999999999999" fill="#ff6aa8"/><rect x="543.9999999999999" y="1388.0" width="1.8" height="1.8" fill="#ff7a30"/><rect x="560.1" y="1389.7" width="1.8" height="10.399999999999999" fill="#00f060"/><rect x="561.9" y="1389.7" width="1.8" height="10.399999999999999" fill="#ff6aa8"/><rect x="561.9" y="1388.0" width="1.8" height="1.8" fill="#ff7a30"/><rect x="518.1" y="1403.6000000000001" width="1.8" height="10.600000000000001" fill="#00f060"/><rect x="519.9" y="1403.6000000000001" width="1.8" height="10.600000000000001" fill="#ff6aa8"/><rect x="519.9" y="1401.9" width="1.8" height="1.8" fill="#ff7a30"/><rect x="536.1" y="1403.6000000000001" width="1.8" height="10.600000000000001" fill="#00f060"/><rect x="537.9" y="1403.6000000000001" width="1.8" height="10.600000000000001" fill="#ff6aa8"/><rect x="537.9" y="1401.9" width="1.8" height="1.8" fill="#ff7a30"/><rect x="554.1" y="1403.6000000000001" width="1.8" height="10.600000000000001" fill="#00f060"/><rect x="555.9" y="1403.6000000000001" width="1.8" height="10.600000000000001" fill="#ff6aa8"/><rect x="555.9" y="1401.9" width="1.8" height="1.8" fill="#ff7a30"/></g><rect x="517.3" y="1367.2" width="50" height="50" rx="3.5" fill="none" stroke="#777" stroke-width="2"/></svg>
<div class="abs" style="left:1832px;top:638.5px;width:592px;height:2px;background:#8b8b8b"></div>
<svg class="abs" style="left:0;top:0" width="2560" height="1746" viewBox="0 0 2560 1746"><defs><filter id="bl1" x="-20%" y="-20%" width="140%" height="140%"><feGaussianBlur stdDeviation="1.2"/></filter><filter id="bl3" x="-30%" y="-30%" width="160%" height="160%"><feGaussianBlur stdDeviation="3.5"/></filter><filter id="bl6" x="-40%" y="-40%" width="180%" height="180%"><feGaussianBlur stdDeviation="7"/></filter><filter id="soft" x="-5%" y="-5%" width="110%" height="110%"><feGaussianBlur stdDeviation="0.55"/></filter><clipPath id="cbs"><polygon points="1071.1,1236.0 1093.1,1223.4 1114.6,1217.1 1141.1,1230.9 1166.3,1246.1 1177.7,1271.3 1182.7,1292.8 1181.4,1311.7 1170.1,1321.0 1131.0,1285.2 1093.1,1262.5"/></clipPath><linearGradient id="gbs" gradientUnits="userSpaceOnUse" x1="1080.5" y1="1227.2" x2="1181.4" y2="1313.0"><stop offset="0" stop-color="#2b2b2b"/><stop offset="0.45" stop-color="#383838"/><stop offset="0.7" stop-color="#4c4c4c"/><stop offset="1" stop-color="#626262"/></linearGradient><clipPath id="cfs"><polygon points="1358.1,1260.5 1380.8,1242.3 1404.1,1224.1 1423.7,1219.6 1459.1,1219.1 1479.3,1228.4 1486.8,1239.8 1481.8,1249.9 1459.1,1262.5 1408.6,1283.9 1368.2,1304.1 1358.1,1300.4 1353.8,1277.6"/></clipPath><linearGradient id="gfs" gradientUnits="userSpaceOnUse" x1="1358.1" y1="1277.6" x2="1484.3" y2="1227.2"><stop offset="0" stop-color="#3a3a3a"/><stop offset="0.35" stop-color="#505050"/><stop offset="0.6" stop-color="#7c7c7c"/><stop offset="0.85" stop-color="#b0b0b0"/><stop offset="1" stop-color="#8a8a8a"/></linearGradient><clipPath id="cbl"><polygon points="1197.1,1015.1 1329.1,1025.2 1323.5,1060.1 1307.6,1067.6 1279.9,1073.7 1258.4,1073.7 1252.1,1108.5 1245.8,1141.3 1237.0,1176.7 1166.3,1246.1 1114.6,1217.6 1156.2,1176.7 1184.0,1154.0 1191.5,1141.3 1197.8,1075.7"/></clipPath><linearGradient id="gbl" gradientUnits="userSpaceOnUse" x1="1136.0" y1="1161.5" x2="1211.7" y2="1227.2"><stop offset="0" stop-color="#0b56a0"/><stop offset="0.25" stop-color="#125ea8"/><stop offset="0.6" stop-color="#094e94"/><stop offset="1" stop-color="#07427e"/></linearGradient><clipPath id="cfl"><polygon points="1278.6,1071.9 1307.6,1066.1 1323.5,1058.6 1345.5,1101.0 1365.7,1141.3 1383.4,1181.7 1404.1,1224.1 1358.1,1260.5 1340.4,1201.9 1325.3,1151.4 1302.6,1108.5"/></clipPath><linearGradient id="gfl" gradientUnits="userSpaceOnUse" x1="1315.2" y1="1161.5" x2="1375.8" y2="1141.3"><stop offset="0" stop-color="#053460"/><stop offset="0.4" stop-color="#063c70"/><stop offset="0.62" stop-color="#095094"/><stop offset="1" stop-color="#0b569e"/></linearGradient><clipPath id="csh"><polygon points="1201.4,921.5 1162.3,911.4 1152.2,908.9 1156.0,861.0 1162.3,801.6 1191.3,792.8 1226.7,786.0 1238.0,784.0 1238.0,775.1 1302.4,775.1 1302.4,790.3 1332.7,802.9 1336.5,843.3 1339.0,911.4 1340.3,974.5 1335.2,1020.0 1327.6,1031.3 1302.4,1033.9 1269.6,1031.3 1241.8,1025.0 1201.4,1017.4 1195.1,1013.7 1200.9,987.2"/></clipPath><linearGradient id="gsh" gradientUnits="userSpaceOnUse" x1="1201.4" y1="760.0" x2="1340.3" y2="760.0"><stop offset="0" stop-color="#8a7608"/><stop offset="0.2" stop-color="#92801e"/><stop offset="0.45" stop-color="#aa9c56"/><stop offset="0.7" stop-color="#c6ba78"/><stop offset="0.82" stop-color="#c8bc7a"/><stop offset="0.87" stop-color="#dccb58"/><stop offset="0.93" stop-color="#f2dc30"/><stop offset="1" stop-color="#e8cc10"/></linearGradient><linearGradient id="gnk" gradientUnits="userSpaceOnUse" x1="1150.0" y1="756.3" x2="1150.0" y2="824.5"><stop offset="0" stop-color="#7e5848"/><stop offset="0.3" stop-color="#b07c68"/><stop offset="0.6" stop-color="#f0b09a"/><stop offset="1" stop-color="#ffc8b0"/></linearGradient><linearGradient id="gcl" gradientUnits="userSpaceOnUse" x1="1236.0" y1="780.1" x2="1296.6" y2="860.9"><stop offset="0" stop-color="#cfcc9c"/><stop offset="0.5" stop-color="#ebe6a8"/><stop offset="1" stop-color="#e0d060"/></linearGradient><linearGradient id="gcr" gradientUnits="userSpaceOnUse" x1="1301.6" y1="770.0" x2="1336.0" y2="770.0"><stop offset="0" stop-color="#ffea00"/><stop offset="0.5" stop-color="#fff060"/><stop offset="1" stop-color="#f0d400"/></linearGradient><clipPath id="carm"><polygon points="1162.1,913.3 1193.4,913.3 1195.6,930.9 1203.6,944.5 1212.7,957.0 1221.8,967.2 1236.5,972.9 1253.6,977.4 1267.2,983.1 1286.5,991.1 1285.9,997.9 1280.8,1000.7 1279.7,1003.6 1260.4,1012.6 1242.2,1029.7 1233.1,1026.3 1217.2,1019.5 1201.3,999.0 1187.7,976.3 1174.1,953.6 1164.4,935.4"/><polygon points="1229.7,1022.9 1242.2,1025.1 1253.6,1049.0 1249.6,1054.7 1242.2,1054.4 1230.8,1036.5"/><polygon points="1246.7,1016.1 1261.5,1010.4 1282.5,1049.0 1278.8,1054.2 1269.5,1054.2 1249.0,1025.1"/><polygon points="1268.3,1005.8 1280.8,999.6 1301.8,1030.8 1298.1,1036.5 1291.0,1037.2 1270.6,1013.8"/></clipPath><linearGradient id="gslv" gradientUnits="userSpaceOnUse" x1="1151.0" y1="760.0" x2="1206.5" y2="760.0"><stop offset="0" stop-color="#a48a00"/><stop offset="0.3" stop-color="#8c7400"/><stop offset="1" stop-color="#8a7606"/></linearGradient><clipPath id="cface"><polygon points="1215.5,555 1368,555 1376,590 1377.5,606 1378.3,620.0 1376.0,629.1 1371.5,642.7 1373.8,649.5 1377.2,665.4 1379.4,683.6 1377.2,699.5 1372.6,716.5 1365.8,733.6 1357.9,748.4 1347.6,762.0 1334.0,772.2 1324.9,777.3 1302.2,778.5 1286.3,773.3 1269.3,767.7 1252.2,759.7 1239.7,752.9 1231.8,742.7 1222.7,729.0 1213.6,714.3 1209.1,709.7 1209.1,670.0"/></clipPath><linearGradient id="gface" gradientUnits="userSpaceOnUse" x1="1214.7" y1="620.0" x2="1379.4" y2="620.0"><stop offset="0" stop-color="#8f6959"/><stop offset="0.36" stop-color="#8d6757"/><stop offset="0.5" stop-color="#a07868"/><stop offset="0.61" stop-color="#d4a894"/><stop offset="0.75" stop-color="#f6c6b0"/><stop offset="1" stop-color="#ffceb6"/></linearGradient><linearGradient id="geL" gradientUnits="userSpaceOnUse" x1="1236.3" y1="637.0" x2="1288.6" y2="667.7"><stop offset="0" stop-color="#c8ccd0"/><stop offset="0.5" stop-color="#a4aaae"/><stop offset="1" stop-color="#8a9094"/></linearGradient><clipPath id="ceL"><polygon points="1235.8,668.8 1236.3,654.1 1240.9,642.7 1250.0,635.3 1261.3,632.5 1272.7,634.2 1281.8,639.3 1287.4,649.5 1289.1,667.7 1263.6,666.8"/></clipPath><clipPath id="ceR"><polygon points="1332.9,666.6 1333.4,651.8 1338.6,639.3 1347.6,633.6 1357.9,634.8 1363.5,642.7 1365.8,662.0"/></clipPath><clipPath id="chair"><polygon points="1138.9,620.3 1132.0,588.8 1145.9,590.7 1138.9,569.9 1133.2,550.3 1147.1,557.3 1142.1,538.3 1140.2,518.8 1157.9,528.9 1160.4,510.6 1163.5,491.6 1186.2,508.7 1190.7,486.6 1205.8,466.4 1231.0,495.4 1237.4,477.8 1250.6,460.7 1274.6,489.1 1274.6,474.0 1280.3,462.6 1296.7,484.1 1316.8,500.5 1340.8,516.9 1359.7,535.8 1372.4,557.3 1378.7,576.2 1380.2,595.1 1377.4,607.1 1372.4,588.8 1363.5,571.1 1349.7,580.0 1326.9,593.8 1296.7,590.1 1265.1,581.2 1243.7,574.9 1229.8,573.7 1222.2,586.3 1218.4,601.4 1217.2,626.7 1215.9,620.0 1216.1,671.7 1209.1,670.0 1195.4,679.1 1166.5,665.4 1150.0,646.1"/></clipPath><linearGradient id="ghair" gradientUnits="userSpaceOnUse" x1="1130" y1="0" x2="1381" y2="0"><stop offset="0" stop-color="#905a00"/><stop offset="0.34" stop-color="#a26a00"/><stop offset="0.52" stop-color="#d48e00"/><stop offset="0.68" stop-color="#f0a600"/><stop offset="0.82" stop-color="#ffca00"/><stop offset="0.9" stop-color="#ffd800"/><stop offset="1" stop-color="#ffb400"/></linearGradient><linearGradient id="gear" gradientUnits="userSpaceOnUse" x1="1164.8" y1="648.4" x2="1213.6" y2="679.1"><stop offset="0" stop-color="#c89884"/><stop offset="0.4" stop-color="#b08270"/><stop offset="0.8" stop-color="#94705e"/><stop offset="1" stop-color="#8f6959"/></linearGradient></defs><g filter="url(#soft)"><polygon points="1071.1,1236.0 1093.1,1223.4 1114.6,1217.1 1141.1,1230.9 1166.3,1246.1 1177.7,1271.3 1182.7,1292.8 1181.4,1311.7 1170.1,1321.0 1131.0,1285.2 1093.1,1262.5" fill="url(#gbs)" /><g clip-path="url(#cbs)"><polygon points="1067.9,1234.7 1093.1,1263.8 1131.0,1286.5 1171.3,1324.3 1161.2,1328.1 1120.9,1295.3 1083.0,1272.6 1060.3,1242.3" fill="#262626" filter="url(#bl1)"/><polygon points="1134.7,1273.9 1156.2,1262.5 1178.9,1270.1 1184.5,1292.8 1183.0,1313.0 1171.3,1311.7 1151.2,1290.3" fill="#5e5e5e" filter="url(#bl1)"/><polygon points="1098.1,1242.8 1117.1,1232.2 1127.2,1246.1 1108.7,1254.4" fill="#5a5a5a" /><polygon points="1113.8,1258.0 1130.5,1248.6 1136.5,1260.0 1121.4,1268.0" fill="#5a5a5a" /><polygon points="1141.1,1238.5 1161.2,1243.6 1163.8,1248.6 1143.6,1243.6" fill="#555" /><polygon points="1143.6,1248.6 1165.0,1253.7 1167.6,1258.7 1146.1,1253.7" fill="#555" /></g><polygon points="1358.1,1260.5 1380.8,1242.3 1404.1,1224.1 1423.7,1219.6 1459.1,1219.1 1479.3,1228.4 1486.8,1239.8 1481.8,1249.9 1459.1,1262.5 1408.6,1283.9 1368.2,1304.1 1358.1,1300.4 1353.8,1277.6" fill="url(#gfs)" /><g clip-path="url(#cfs)"><polygon points="1353.1,1280.2 1408.6,1272.6 1459.1,1252.4 1488.1,1238.5 1491.9,1252.4 1459.1,1267.5 1408.6,1287.7 1368.2,1307.9 1353.1,1302.9" fill="#2e2e2e" filter="url(#bl1)"/><polygon points="1377.0,1257.4 1396.0,1252.4 1390.9,1275.1 1379.6,1280.2" fill="#6a6a6a" filter="url(#bl1)"/><polygon points="1399.8,1251.1 1418.7,1248.6 1408.6,1270.1 1397.2,1273.9" fill="#666" filter="url(#bl1)"/><polygon points="1393.5,1234.7 1423.7,1222.1 1427.5,1227.2 1398.5,1241.0" fill="#8c8c8c" filter="url(#bl1)"/></g><polygon points="1197.1,1015.1 1329.1,1025.2 1323.5,1060.1 1307.6,1067.6 1279.9,1073.7 1258.4,1073.7 1252.1,1108.5 1245.8,1141.3 1237.0,1176.7 1166.3,1246.1 1114.6,1217.6 1156.2,1176.7 1184.0,1154.0 1191.5,1141.3 1197.8,1075.7" fill="url(#gbl)" /><g clip-path="url(#cbl)"><polygon points="1186.5,1005.0 1340.4,1017.7 1332.9,1060.6 1257.2,1071.9 1189.0,1068.1" fill="#084a8c" filter="url(#bl3)"/><polygon points="1204.2,1058.1 1257.2,1075.7 1282.4,1073.2 1325.3,1059.3 1327.8,1048.0 1282.4,1063.1 1231.9,1060.6" fill="#074482" filter="url(#bl3)"/><polygon points="1206.7,1080.8 1231.9,1083.3 1221.8,1141.3 1171.3,1191.8 1151.2,1191.8 1194.1,1146.4" fill="#1866ae" filter="url(#bl3)"/><polygon points="1258.4,1073.7 1252.1,1108.5 1245.8,1141.3 1237.0,1176.7 1166.3,1246.1 1156.2,1239.8 1226.9,1171.6 1239.5,1126.2 1247.1,1075.7" fill="#07437e" filter="url(#bl3)"/></g><polygon points="1278.6,1071.9 1307.6,1066.1 1323.5,1058.6 1345.5,1101.0 1365.7,1141.3 1383.4,1181.7 1404.1,1224.1 1358.1,1260.5 1340.4,1201.9 1325.3,1151.4 1302.6,1108.5" fill="url(#gfl)" /><g clip-path="url(#cfl)"><polygon points="1340.4,1201.9 1358.1,1260.5 1404.1,1224.1 1393.5,1201.9 1365.7,1227.2" fill="#08488a" filter="url(#bl3)"/></g><polygon points="1201.4,921.5 1162.3,911.4 1152.2,908.9 1156.0,861.0 1162.3,801.6 1191.3,792.8 1226.7,786.0 1238.0,784.0 1238.0,775.1 1302.4,775.1 1302.4,790.3 1332.7,802.9 1336.5,843.3 1339.0,911.4 1340.3,974.5 1335.2,1020.0 1327.6,1031.3 1302.4,1033.9 1269.6,1031.3 1241.8,1025.0 1201.4,1017.4 1195.1,1013.7 1200.9,987.2" fill="url(#gsh)" /><g clip-path="url(#csh)"><polygon points="1145.9,797.9 1226.7,785.2 1236.8,835.7 1211.5,921.5 1145.9,916.5" fill="#8a7200" filter="url(#bl3)"/><polygon points="1161.1,800.4 1238.0,783.2 1251.9,810.5 1226.7,825.6 1191.3,818.1 1163.6,825.6" fill="#dcbc0c" filter="url(#bl6)"/><polygon points="1191.3,792.8 1238.0,783.2 1246.9,800.4 1211.5,808.0" fill="#e8c810" filter="url(#bl3)"/><polygon points="1302.4,790.3 1333.9,802.9 1337.7,866.0 1325.1,866.0 1312.5,835.7" fill="#ffee20" filter="url(#bl3)"/><polygon points="1193.9,987.2 1211.5,987.2 1226.7,1027.5 1196.4,1020.0" fill="#8c7400" filter="url(#bl3)"/></g><polyline points="1311.2,843.3 1313.8,936.7 1313.0,1032.6" fill="none" stroke="#a88c10" stroke-width="1.6"/><polyline points="1306.9,881.2 1308.7,961.9 1308.0,1032.6" fill="none" stroke="#d8cc88" stroke-width="2.2"/><polygon points="1239.7,744.9 1240.9,767.7 1239.7,781.3 1263.6,813.1 1301.6,835.8 1302.2,776.7 1286.3,767.7" fill="url(#gnk)" /><polygon points="1236.0,777.1 1256.2,797.3 1276.4,810.4 1300.6,821.5 1296.6,826.5 1295.6,882.1 1271.4,846.7 1251.2,815.4 1236.0,789.2" fill="url(#gcl)" /><polygon points="1264.3,834.6 1295.6,826.5 1295.6,882.1" fill="#d2b010" filter="url(#bl1)"/><polyline points="1236.0,789.2 1251.2,815.4 1271.4,846.7 1295.6,882.1" fill="none" stroke="#9c7c08" stroke-width="1.8"/><polygon points="1301.6,790.2 1307.7,794.2 1334.0,804.3 1336.0,839.7 1317.8,826.5 1307.7,850.8 1296.6,826.5 1300.6,821.5" fill="url(#gcr)" /><polyline points="1296.6,826.5 1307.7,850.8 1317.8,826.5 1336.0,839.7" fill="none" stroke="#a8860a" stroke-width="1.6"/><g clip-path="url(#carm)"><rect x="1150" y="900" width="170" height="170" fill="#b97a64"/><polygon points="1228.6,1020.6 1304.7,997.9 1304.7,1060.3 1228.6,1060.3" fill="#c98870" /><polygon points="1267.2,1003.6 1304.7,992.2 1304.7,1039.9 1287.6,1039.9" fill="#dc9c82" filter="url(#bl1)"/><polygon points="1212.7,992.2 1253.6,995.6 1279.7,1003.6 1260.4,1013.8 1242.2,1030.8 1230.8,1025.1 1214.9,1014.9" fill="#8e5e4c" filter="url(#bl3)"/><polygon points="1160.4,912.7 1169.5,912.7 1171.8,935.4 1180.9,953.6 1194.5,976.3 1208.1,999.0 1224.0,1019.5 1237.7,1037.6 1230.8,1039.9 1212.7,1019.5 1196.8,999.0 1183.2,976.3 1169.5,953.6 1161.6,935.4" fill="#9c6650" filter="url(#bl3)"/><polygon points="1177.5,913.8 1194.5,913.8 1196.8,930.9 1204.7,944.5 1213.8,957.0 1222.9,967.2 1237.7,972.9 1254.7,977.4 1268.3,983.1 1287.6,991.1 1286.5,999.0 1264.9,995.6 1242.2,992.2 1224.0,985.4 1208.1,974.0 1193.4,953.6 1183.2,935.4" fill="#dc9880" filter="url(#bl3)"/><polygon points="1185.4,918.4 1193.4,917.3 1195.9,930.9 1203.8,944.5 1212.9,957.0 1222.0,967.2 1236.8,972.9 1253.8,977.4 1267.4,983.1 1275.1,986.5 1264.9,989.9 1242.2,986.0 1227.4,980.8 1212.7,969.5 1199.1,951.3 1190.0,935.4" fill="#fff0e4" filter="url(#bl1)"/><polygon points="1267.2,984.3 1286.5,991.1 1285.9,997.9 1276.3,999.0" fill="#f2b49c" filter="url(#bl1)"/><polygon points="1242.2,1026.3 1246.7,1025.1 1254.7,1049.0 1250.7,1051.3" fill="#e2a288" filter="url(#bl1)"/><polygon points="1260.4,1012.6 1264.9,1010.4 1283.3,1049.0 1279.7,1051.3" fill="#eeb094" filter="url(#bl1)"/><polygon points="1279.7,1001.9 1284.2,999.6 1302.4,1030.8 1299.0,1033.1" fill="#f0b49a" filter="url(#bl1)"/></g><g clip-path="url(#csh)"><polygon points="1152.2,908.9 1156.0,861.0 1162.3,801.6 1201.4,810.5 1202.7,921.5" fill="url(#gslv)" /><polygon points="1161.1,800.4 1238.0,783.2 1251.9,810.5 1226.7,825.6 1191.3,818.1 1163.6,825.6" fill="#dcbc0c" filter="url(#bl6)"/></g><polygon points="1215.5,555 1368,555 1376,590 1377.5,606 1378.3,620.0 1376.0,629.1 1371.5,642.7 1373.8,649.5 1377.2,665.4 1379.4,683.6 1377.2,699.5 1372.6,716.5 1365.8,733.6 1357.9,748.4 1347.6,762.0 1334.0,772.2 1324.9,777.3 1302.2,778.5 1286.3,773.3 1269.3,767.7 1252.2,759.7 1239.7,752.9 1231.8,742.7 1222.7,729.0 1213.6,714.3 1209.1,709.7 1209.1,670.0" fill="url(#gface)" /><g clip-path="url(#cface)"><polygon points="1213.6,556.4 1311.3,556.4 1309.0,628.0 1263.6,622.3 1236.3,633.6 1213.6,631.4" fill="#b68b7b" filter="url(#bl6)"/><polygon points="1331.7,556.4 1394.2,556.4 1394.2,638.2 1365.8,633.6 1343.1,631.4 1334.0,625.7" fill="#fff0e2" filter="url(#bl6)"/><polygon points="1213.6,714.3 1263.6,722.2 1309.0,742.7 1331.7,750.6 1343.1,762.0 1334.0,773.3 1324.9,778.5 1302.2,779.6 1269.3,768.8 1239.7,754.0" fill="#8f6757" filter="url(#bl6)" opacity="0.85"/><polygon points="1320.4,744.9 1354.5,733.6 1360.1,748.4 1347.6,763.1 1334.0,773.3 1324.9,778.5 1313.6,767.7" fill="#c8927e" filter="url(#bl6)" opacity="0.7"/><polygon points="1284.0,690.4 1311.3,699.5 1318.1,717.7 1297.7,722.2 1284.0,710.9" fill="#a87e6e" filter="url(#bl3)"/><polygon points="1343.1,688.2 1381.7,688.2 1377.2,706.3 1365.8,729.0 1349.9,729.0" fill="#f6bca6" filter="url(#bl3)"/><polygon points="1318.1,646.1 1336.3,697.2 1309.0,699.5 1313.6,674.5" fill="#ffeee4" filter="url(#bl3)" opacity="0.75"/><polygon points="1319.9,650.7 1333.8,695.9 1314.2,697.7 1317.4,676.8" fill="#fffaf4" filter="url(#bl1)"/></g><polygon points="1235.8,668.8 1236.3,654.1 1240.9,642.7 1250.0,635.3 1261.3,632.5 1272.7,634.2 1281.8,639.3 1287.4,649.5 1289.1,667.7 1263.6,666.8" fill="url(#geL)" /><g clip-path="url(#ceL)"><circle cx="1272.1" cy="654.1" r="12" fill="#2a1512"/><circle cx="1262.4" cy="645.2" r="6.6" fill="#c6cace"/></g><polygon points="1332.9,666.6 1333.4,651.8 1338.6,639.3 1347.6,633.6 1357.9,634.8 1363.5,642.7 1365.8,662.0" fill="#fffdfa" /><g clip-path="url(#ceR)"><circle cx="1356.2" cy="651.8" r="9.6" fill="#3a201a"/><circle cx="1349.0" cy="645.2" r="5.4" fill="#fff"/></g><path d="M1234.6 630.8Q1252.2 617.2 1289.7 617.7" fill="none" stroke="#c48800" stroke-width="5.8"/><path d="M1327.8 620.9Q1354.5 620.0 1376.0 623.9" fill="none" stroke="#ffa600" stroke-width="6"/><path d="M1286.9 718.8Q1313.6 743.2 1345.4 714.3" fill="none" stroke="#a0624a" stroke-width="2.1" stroke-linecap="round"/><polygon points="1138.9,620.3 1132.0,588.8 1145.9,590.7 1138.9,569.9 1133.2,550.3 1147.1,557.3 1142.1,538.3 1140.2,518.8 1157.9,528.9 1160.4,510.6 1163.5,491.6 1186.2,508.7 1190.7,486.6 1205.8,466.4 1231.0,495.4 1237.4,477.8 1250.6,460.7 1274.6,489.1 1274.6,474.0 1280.3,462.6 1296.7,484.1 1316.8,500.5 1340.8,516.9 1359.7,535.8 1372.4,557.3 1378.7,576.2 1380.2,595.1 1377.4,607.1 1372.4,588.8 1363.5,571.1 1349.7,580.0 1326.9,593.8 1296.7,590.1 1265.1,581.2 1243.7,574.9 1229.8,573.7 1222.2,586.3 1218.4,601.4 1217.2,626.7 1215.9,620.0 1216.1,671.7 1209.1,670.0 1195.4,679.1 1166.5,665.4 1150.0,646.1" fill="url(#ghair)" /><g clip-path="url(#chair)"><polygon points="1113.7,689.7 1113.7,540.9 1145.2,525.7 1174.3,523.2 1197.0,540.9 1214.0,567.4 1218.4,588.8 1219.7,689.7" fill="#794b00" filter="url(#bl3)"/><polygon points="1132.6,515.6 1163.5,487.9 1205.8,462.6 1250.6,457.6 1280.3,460.1 1296.7,484.1 1258.8,503.0 1220.9,504.3 1190.7,515.6 1157.9,525.7" fill="#c88a00" filter="url(#bl3)"/><polygon points="1309.3,520.7 1334.5,520.7 1359.7,550.9 1347.1,576.2 1324.4,588.8 1316.8,563.6" fill="#ffcc00" filter="url(#bl3)"/><polygon points="1324.4,525.7 1342.1,530.8 1350.9,548.4 1334.5,548.4" fill="#fff200" filter="url(#bl3)"/><polygon points="1215.9,515.6 1246.2,520.7 1284.0,545.9 1277.7,550.9 1239.9,530.8 1215.9,525.7" fill="#e8b000" filter="url(#bl3)"/><polygon points="1215.9,532.0 1239.9,539.6 1271.4,559.8 1258.8,562.3 1233.6,547.2" fill="#a87400" filter="url(#bl3)"/><polygon points="1220.9,548.4 1246.2,553.5 1277.7,569.9 1258.8,571.1 1233.6,561.0" fill="#e0a400" filter="url(#bl3)"/><polygon points="1229.8,574.3 1265.1,581.9 1296.7,590.7 1326.9,594.5 1326.9,587.5 1296.7,582.5 1265.1,573.7 1233.6,567.4" fill="#ffb000" filter="url(#bl1)"/></g><polygon points="1165.3,648.4 1169.3,641.6 1178.4,637.0 1188.6,638.7 1198.8,646.1 1206.8,656.3 1210.2,670.0 1216.2,672.0 1216.2,688.2 1213.6,714.3 1209.1,709.7 1197.7,701.8 1184.1,689.3 1172.7,673.4 1167.0,659.8" fill="url(#gear)" /><path d="M1174.4 654.1Q1179.5 646.1 1188.6 652.9Q1195.4 659.8 1196.6 668.8" fill="none" stroke="#8e5e4c" stroke-width="3.5" stroke-linecap="round"/><path d="M1181.2 656.3L1185.8 676.8" stroke="#96644f" stroke-width="2.4" stroke-linecap="round"/></g><circle cx="1597" cy="399" r="33" fill="#fff"/><circle cx="1597" cy="399" r="11" fill="#000"/><g transform="rotate(0 1597 399)"><path d="M1597 372.4L1601.1 384.4H1592.9Z" fill="#000"/></g><g transform="rotate(40 1597 399)"><path d="M1597 372.4L1601.1 384.4H1592.9Z" fill="#000"/></g><g transform="rotate(80 1597 399)"><path d="M1597 372.4L1601.1 384.4H1592.9Z" fill="#000"/></g><g transform="rotate(120 1597 399)"><path d="M1597 372.4L1601.1 384.4H1592.9Z" fill="#000"/></g><g transform="rotate(160 1597 399)"><path d="M1597 372.4L1601.1 384.4H1592.9Z" fill="#000"/></g><g transform="rotate(200 1597 399)"><path d="M1597 372.4L1601.1 384.4H1592.9Z" fill="#000"/></g><g transform="rotate(240 1597 399)"><path d="M1597 372.4L1601.1 384.4H1592.9Z" fill="#000"/></g><g transform="rotate(280 1597 399)"><path d="M1597 372.4L1601.1 384.4H1592.9Z" fill="#000"/></g><g transform="rotate(320 1597 399)"><path d="M1597 372.4L1601.1 384.4H1592.9Z" fill="#000"/></g></svg>
<svg class="abs" style="left:0;top:0" width="700" height="860" viewBox="0 0 700 860"><defs><clipPath id="lstc"><rect x="112" y="276" width="582" height="572"/></clipPath></defs><g clip-path="url(#lstc)"><g opacity="0.62"><polygon points="156.5,480.3 160.4,478.6 164.6,484.8 162.5,487.8" fill="#5e5e5e" /><polygon points="176.7,482.3 181.2,479.8 186.4,482.8 186.0,484.4 178.0,486.3" fill="#5e5e5e" /><polygon points="163.5,466.4 169.0,466.4 164.4,480.8 160.2,479.2" fill="#1b55a2" /><polygon points="168.0,466.4 173.6,466.4 181.2,480.2 177.4,482.8" fill="#2164b6" /><polygon points="162.0,459.8 165.0,459.8 167.0,465.8 169.5,469.3 167.5,470.3 163.5,465.8" fill="#f2c6aa" /><polygon points="161.0,449.3 166.0,448.1 173.0,448.6 174.6,450.8 174.9,466.8 164.0,467.1 163.6,460.8 160.8,459.8" fill="#f4d63c" /><polygon points="160.8,449.8 164.2,448.8 164.6,460.8 160.8,459.8" fill="#e6c42c" /><polygon points="169.2,448.8 171.0,448.8 172.4,466.8 170.6,466.8" fill="#f9e788" /><polygon points="167.5,443.8 172.0,445.8 171.5,449.8 167.5,449.4" fill="#eebfa4" /><polygon points="166.0,433.3 172.0,432.8 177.6,435.3 177.8,439.8 176.6,444.0 173.6,447.4 169.0,446.0 166.0,442.3" fill="#f7d4bc" /><circle cx="170.2" cy="439.0" r="1.25" fill="#fff"/><circle cx="175.2" cy="438.7" r="1.1" fill="#fff"/><circle cx="170.7" cy="439.1" r="0.75" fill="#3a2a2a"/><circle cx="175.6" cy="438.8" r="0.7" fill="#3a2a2a"/><polygon points="164.6,437.3 166.8,437.3 167.0,441.3 165.4,440.8" fill="#f2c4a8" /><polygon points="160.0,433.8 161.4,429.0 163.0,430.4 164.4,426.2 166.4,428.4 168.4,424.8 170.4,427.4 173.0,425.8 174.0,428.8 177.0,431.2 178.2,435.0 177.2,435.8 174.5,433.1 171.0,434.0 168.0,433.8 166.6,437.4 166.2,442.8 164.0,444.8 162.0,441.8 160.4,437.8" fill="#e8921e" /><polygon points="160.0,433.8 161.4,429.0 163.0,430.4 164.4,426.2 165.6,427.8 164.6,433.8 165.0,439.8 164.0,444.8 162.0,441.8 160.4,437.8" fill="#d27c12" /></g><polygon points="156.4,549.6 159.8,549.0 162.0,556.2 159.8,558.8" fill="#5e5e5e" /><polygon points="175.4,557.2 180.8,556.6 185.8,558.2 185.8,559.6 175.4,559.6" fill="#5e5e5e" /><polygon points="166.8,540.7 172.8,541.2 164.8,552.7 158.8,551.2 160.8,547.7" fill="#1b55a2" /><polygon points="171.3,540.7 177.8,540.7 180.4,557.2 176.2,557.2" fill="#2164b6" /><polygon points="164.3,533.2 166.8,533.2 169.8,537.2 173.8,539.2 173.3,541.0 168.3,539.8" fill="#f2c6aa" /><polygon points="162.8,522.7 167.8,521.5 174.8,522.0 176.4,524.2 176.7,540.2 165.8,540.5 165.4,534.2 162.6,533.2" fill="#f4d63c" /><polygon points="162.6,523.2 166.0,522.2 166.4,534.2 162.6,533.2" fill="#e6c42c" /><polygon points="171.0,522.2 172.8,522.2 174.2,540.2 172.4,540.2" fill="#f9e788" /><polygon points="169.3,515.2 173.8,517.2 173.3,523.2 169.3,522.8" fill="#eebfa4" /><polygon points="167.8,504.7 173.8,504.2 179.4,506.7 179.6,511.2 178.4,515.4 175.4,518.8 170.8,517.4 167.8,513.7" fill="#f7d4bc" /><circle cx="172.0" cy="510.4" r="1.25" fill="#fff"/><circle cx="177.0" cy="510.09999999999997" r="1.1" fill="#fff"/><circle cx="172.5" cy="510.5" r="0.75" fill="#3a2a2a"/><circle cx="177.4" cy="510.2" r="0.7" fill="#3a2a2a"/><polygon points="166.4,508.7 168.6,508.7 168.8,512.7 167.2,512.2" fill="#f2c4a8" /><polygon points="161.8,505.2 163.2,500.4 164.8,501.8 166.2,497.6 168.2,499.8 170.2,496.2 172.2,498.8 174.8,497.2 175.8,500.2 178.8,502.6 180.0,506.4 179.0,507.2 176.3,504.5 172.8,505.4 169.8,505.2 168.4,508.8 168.0,514.2 165.8,516.2 163.8,513.2 162.2,509.2" fill="#e8921e" /><polygon points="161.8,505.2 163.2,500.4 164.8,501.8 166.2,497.6 167.4,499.2 166.4,505.2 166.8,511.2 165.8,516.2 163.8,513.2 162.2,509.2" fill="#d27c12" /><polygon points="165.4,623.9 169.0,622.5 172.6,628.5 171.0,631.5" fill="#5e5e5e" /><polygon points="175.5,628.5 180.0,627.5 186.0,629.5 186.0,631.1 175.5,631.1" fill="#5e5e5e" /><polygon points="171.0,610.5 177.0,610.5 173.0,625.5 169.0,623.5" fill="#1b55a2" /><polygon points="176.5,610.5 181.6,610.5 181.3,628.5 177.0,628.5" fill="#2164b6" /><polygon points="169.0,603.5 171.6,603.5 173.0,609.5 175.0,612.5 173.4,613.1 170.0,609.5" fill="#f2c6aa" /><polygon points="168.0,593.0 173.0,591.8 180.0,592.3 181.6,594.5 181.9,610.5 171.0,610.8 170.6,604.5 167.8,603.5" fill="#f4d63c" /><polygon points="167.8,593.5 171.2,592.5 171.6,604.5 167.8,603.5" fill="#e6c42c" /><polygon points="176.2,592.5 178.0,592.5 179.4,610.5 177.6,610.5" fill="#f9e788" /><polygon points="174.5,587.5 179.0,589.5 178.5,593.5 174.5,593.1" fill="#eebfa4" /><polygon points="173.0,577.0 179.0,576.5 184.6,579.0 184.8,583.5 183.6,587.7 180.6,591.1 176.0,589.7 173.0,586.0" fill="#f7d4bc" /><circle cx="177.2" cy="582.7" r="1.25" fill="#fff"/><circle cx="182.2" cy="582.4" r="1.1" fill="#fff"/><circle cx="177.7" cy="582.8" r="0.75" fill="#3a2a2a"/><circle cx="182.6" cy="582.5" r="0.7" fill="#3a2a2a"/><polygon points="171.6,581.0 173.8,581.0 174.0,585.0 172.4,584.5" fill="#f2c4a8" /><polygon points="167.0,577.5 168.4,572.7 170.0,574.1 171.4,569.9 173.4,572.1 175.4,568.5 177.4,571.1 180.0,569.5 181.0,572.5 184.0,574.9 185.2,578.7 184.2,579.5 181.5,576.8 178.0,577.7 175.0,577.5 173.6,581.1 173.2,586.5 171.0,588.5 169.0,585.5 167.4,581.5" fill="#e8921e" /><polygon points="167.0,577.5 168.4,572.7 170.0,574.1 171.4,569.9 172.6,571.5 171.6,577.5 172.0,583.5 171.0,588.5 169.0,585.5 167.4,581.5" fill="#d27c12" /><polygon points="172.1,698.0 176.4,697.0 182.4,702.0 181.4,703.6 174.4,702.0" fill="#5e5e5e" /><polygon points="172.9,683.0 176.4,683.0 175.4,697.0 172.4,697.5" fill="#1b55a2" /><polygon points="174.4,683.0 180.9,683.0 179.9,699.0 175.4,699.0" fill="#2164b6" /><polygon points="169.8,676.0 172.0,676.0 172.8,684.0 170.8,684.6" fill="#f2c6aa" /><polygon points="167.4,665.5 172.4,664.3 179.4,664.8 181.0,667.0 181.3,683.0 170.4,683.3 170.0,677.0 167.2,676.0" fill="#f4d63c" /><polygon points="167.2,666.0 170.6,665.0 171.0,677.0 167.2,676.0" fill="#e6c42c" /><polygon points="175.6,665.0 177.4,665.0 178.8,683.0 177.0,683.0" fill="#f9e788" /><polygon points="173.9,659.0 178.4,661.0 177.9,666.0 173.9,665.6" fill="#eebfa4" /><polygon points="172.4,648.5 178.4,648.0 184.0,650.5 184.2,655.0 183.0,659.2 180.0,662.6 175.4,661.2 172.4,657.5" fill="#f7d4bc" /><circle cx="176.6" cy="654.2" r="1.25" fill="#fff"/><circle cx="181.6" cy="653.9" r="1.1" fill="#fff"/><circle cx="177.1" cy="654.3" r="0.75" fill="#3a2a2a"/><circle cx="182.0" cy="654" r="0.7" fill="#3a2a2a"/><polygon points="171.0,652.5 173.2,652.5 173.4,656.5 171.8,656.0" fill="#f2c4a8" /><polygon points="166.4,649.0 167.8,644.2 169.4,645.6 170.8,641.4 172.8,643.6 174.8,640.0 176.8,642.6 179.4,641.0 180.4,644.0 183.4,646.4 184.6,650.2 183.6,651.0 180.9,648.3 177.4,649.2 174.4,649.0 173.0,652.6 172.6,658.0 170.4,660.0 168.4,657.0 166.8,653.0" fill="#e8921e" /><polygon points="166.4,649.0 167.8,644.2 169.4,645.6 170.8,641.4 172.0,643.0 171.0,649.0 171.4,655.0 170.4,660.0 168.4,657.0 166.8,653.0" fill="#d27c12" /><polygon points="168.5,769.1 177.0,768.1 185.6,771.2 178.0,775.2" fill="#5e5e5e" /><polygon points="171.0,754.6 176.0,754.6 179.6,768.6 175.6,770.2" fill="#1b55a2" /><polygon points="173.0,754.6 179.0,754.6 175.0,769.6 171.0,768.6" fill="#2164b6" /><polygon points="165.4,746.6 168.0,747.6 165.8,757.6 163.4,757.0" fill="#f2c6aa" /><polygon points="166.0,737.1 171.0,735.9 178.0,736.4 179.6,738.6 179.9,754.6 169.0,754.9 168.6,748.6 165.8,747.6" fill="#f4d63c" /><polygon points="165.8,737.6 169.2,736.6 169.6,748.6 165.8,747.6" fill="#e6c42c" /><polygon points="174.2,736.6 176.0,736.6 177.4,754.6 175.6,754.6" fill="#f9e788" /><polygon points="179.0,747.6 181.0,747.0 184.5,754.6 182.6,755.6" fill="#f6cfb6" /><polygon points="172.5,730.6 177.0,732.6 176.5,737.6 172.5,737.2" fill="#eebfa4" /><polygon points="171.0,720.1 177.0,719.6 182.6,722.1 182.8,726.6 181.6,730.8 178.6,734.2 174.0,732.8 171.0,729.1" fill="#f7d4bc" /><circle cx="175.2" cy="725.8000000000001" r="1.25" fill="#fff"/><circle cx="180.2" cy="725.5" r="1.1" fill="#fff"/><circle cx="175.7" cy="725.9" r="0.75" fill="#3a2a2a"/><circle cx="180.6" cy="725.6" r="0.7" fill="#3a2a2a"/><polygon points="169.6,724.1 171.8,724.1 172.0,728.1 170.4,727.6" fill="#f2c4a8" /><polygon points="165.0,720.6 166.4,715.8 168.0,717.2 169.4,713.0 171.4,715.2 173.4,711.6 175.4,714.2 178.0,712.6 179.0,715.6 182.0,718.0 183.2,721.8 182.2,722.6 179.5,719.9 176.0,720.8 173.0,720.6 171.6,724.2 171.2,729.6 169.0,731.6 167.0,728.6 165.4,724.6" fill="#e8921e" /><polygon points="165.0,720.6 166.4,715.8 168.0,717.2 169.4,713.0 170.6,714.6 169.6,720.6 170.0,726.6 169.0,731.6 167.0,728.6 165.4,724.6" fill="#d27c12" /><polygon points="162.5,836.8 166.0,835.8 169.0,843.3 166.5,846.3" fill="#5e5e5e" /><polygon points="169.0,842.3 174.0,841.7 179.0,844.9 179.0,846.3 169.0,846.3" fill="#5e5e5e" /><polygon points="166.0,835.3 170.0,832.3 172.0,841.3 164.0,843.3" fill="#1b55a2" /><polygon points="170.0,828.3 176.0,828.3 174.5,842.3 170.5,842.3" fill="#2164b6" /><polygon points="162.4,821.3 165.0,822.3 162.2,832.3 160.0,831.7" fill="#f2c6aa" /><polygon points="163.0,810.8 168.0,809.6 175.0,810.1 176.6,812.3 176.9,828.3 166.0,828.6 165.6,822.3 162.8,821.3" fill="#f4d63c" /><polygon points="162.8,811.3 166.2,810.3 166.6,822.3 162.8,821.3" fill="#e6c42c" /><polygon points="171.2,810.3 173.0,810.3 174.4,828.3 172.6,828.3" fill="#f9e788" /><polygon points="176.0,822.3 178.0,821.7 182.0,828.3 180.0,829.7" fill="#f6cfb6" /><polygon points="169.5,803.3 174.0,805.3 173.5,811.3 169.5,810.9" fill="#eebfa4" /><polygon points="168.0,792.8 174.0,792.3 179.6,794.8 179.8,799.3 178.6,803.5 175.6,806.9 171.0,805.5 168.0,801.8" fill="#f7d4bc" /><circle cx="172.2" cy="798.5" r="1.25" fill="#fff"/><circle cx="177.2" cy="798.1999999999999" r="1.1" fill="#fff"/><circle cx="172.7" cy="798.5999999999999" r="0.75" fill="#3a2a2a"/><circle cx="177.6" cy="798.3" r="0.7" fill="#3a2a2a"/><polygon points="166.6,796.8 168.8,796.8 169.0,800.8 167.4,800.3" fill="#f2c4a8" /><polygon points="162.0,793.3 163.4,788.5 165.0,789.9 166.4,785.7 168.4,787.9 170.4,784.3 172.4,786.9 175.0,785.3 176.0,788.3 179.0,790.7 180.2,794.5 179.2,795.3 176.5,792.6 173.0,793.5 170.0,793.3 168.6,796.9 168.2,802.3 166.0,804.3 164.0,801.3 162.4,797.3" fill="#e8921e" /><polygon points="162.0,793.3 163.4,788.5 165.0,789.9 166.4,785.7 167.6,787.3 166.6,793.3 167.0,799.3 166.0,804.3 164.0,801.3 162.4,797.3" fill="#d27c12" /><rect x="122" y="316.4" width="64" height="2.6" fill="#8dc63a"/><rect x="122" y="319" width="64" height="5" fill="#5a3420"/><polygon points="127.5,302.6 130.2,309.6 124.8,309.6" fill="#37622a"/><polygon points="127.5,306.5 131.5,313.5 123.5,313.5" fill="#457a32"/><polygon points="127.5,310.3 133.0,316.6 122.0,316.6" fill="#37622a"/><polygon points="134.0,300.0 137.5,308.3 130.5,308.3" fill="#37622a"/><polygon points="134.0,304.6 139.0,312.9 129.0,312.9" fill="#457a32"/><polygon points="134.0,309.1 141.0,316.6 127.0,316.6" fill="#37622a"/><polygon points="140.5,302.6 143.2,309.6 137.8,309.6" fill="#37622a"/><polygon points="140.5,306.5 144.5,313.5 136.5,313.5" fill="#457a32"/><polygon points="140.5,310.3 146.0,316.6 135.0,316.6" fill="#37622a"/><polygon points="166.0,303.6 168.8,310.1 163.2,310.1" fill="#37622a"/><polygon points="166.0,307.2 170.0,313.7 162.0,313.7" fill="#457a32"/><polygon points="166.0,310.8 171.5,316.6 160.5,316.6" fill="#37622a"/><polygon points="172.0,301.6 175.2,309.1 168.8,309.1" fill="#37622a"/><polygon points="172.0,305.8 176.7,313.3 167.3,313.3" fill="#457a32"/><polygon points="172.0,309.9 178.5,316.6 165.5,316.6" fill="#37622a"/><polygon points="178.0,300.4 181.5,308.5 174.5,308.5" fill="#37622a"/><polygon points="178.0,304.9 183.0,313.0 173.0,313.0" fill="#457a32"/><polygon points="178.0,309.3 185.0,316.6 171.0,316.6" fill="#37622a"/><polygon points="183.5,301.6 186.0,309.1 181.0,309.1" fill="#37622a"/><polygon points="183.5,305.8 187.1,313.3 179.9,313.3" fill="#457a32"/><polygon points="183.5,309.9 188.5,316.6 178.5,316.6" fill="#37622a"/><rect x="150.6" y="303.8" width="7.4" height="12.8" fill="#b08c4c"/><rect x="145.4" y="312.6" width="6" height="4" fill="#a07e42"/><rect x="150.6" y="303.8" width="2.4" height="12.8" fill="#9c7a40"/><rect x="122" y="389.6" width="64" height="2.4" fill="#8dc63a"/><rect x="122" y="392" width="64" height="4.6" fill="#5a3420"/><polygon points="122,378 125.8,389.6 122,389.6" fill="#3f6e2e"/><rect x="128.4" y="372" width="13" height="17.8" rx="1" fill="#a8864a"/><rect x="128.4" y="372" width="4" height="17.8" fill="#94743c"/><polygon points="158.0,375.8 161.1,382.8 154.9,382.8" fill="#37622a"/><polygon points="158.0,379.7 162.5,386.7 153.5,386.7" fill="#457a32"/><polygon points="158.0,383.5 164.2,389.8 151.8,389.8" fill="#37622a"/><rect x="171.6" y="374.4" width="10" height="15.4" rx="1" fill="#a8864a"/><rect x="167.2" y="381.6" width="17.8" height="8.2" fill="#9c7c42"/></g></svg>
</div></div>
</body></html>
